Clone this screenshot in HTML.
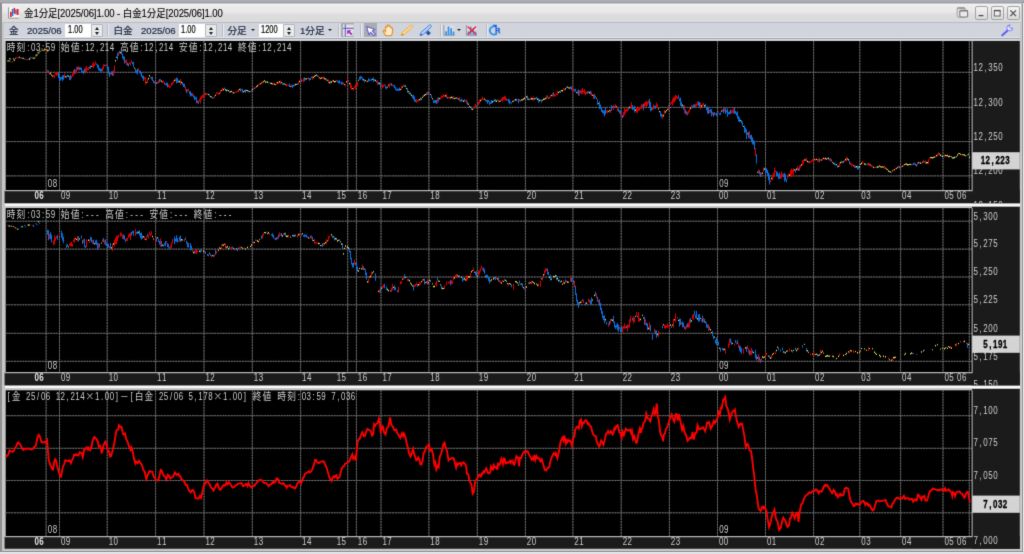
<!DOCTYPE html>
<html lang="ja">
<head>
<meta charset="utf-8">
<title>金1分足[2025/06]1.00 - 白金1分足[2025/06]1.00</title>
<style>
html,body{margin:0;padding:0}
body{width:1024px;height:554px;overflow:hidden;position:relative;background:#dfe1e8;font-family:"Liberation Sans","Noto Sans CJK JP",sans-serif;font-size:10px;color:#222}
.abs{position:absolute}
#topband{left:0;top:0;width:1024px;height:3.4px;background:linear-gradient(#abadb5,#a9abb3 70%,#909298)}
#win{left:0;top:3.4px;width:1022.4px;height:548.8px;background:#c6c6c6}
#ledge{left:0;top:3.4px;width:1.8px;height:548.8px;background:#8f8f8f}
#redge{left:1021.5px;top:3.4px;width:.9px;height:548.8px;background:#b2b2b2}
#bedge{left:0;top:551.4px;width:1022.4px;height:.9px;background:#adadad}
#title{left:1.8px;top:3.6px;width:1018.8px;height:18.6px;background:linear-gradient(#f4f4f4,#ececec 12%,#e9e9e9 42%,#dedede 56%,#dadada)}
#ttext{left:24px;top:6.6px;height:13px;line-height:13px;font-size:10.3px;color:#000;-webkit-text-stroke:.1px #000;white-space:nowrap;letter-spacing:-.1px;transform-origin:0 50%;transform:scale(.925,1)}
#tool{left:4.4px;top:22.2px;width:1015.2px;height:14.8px;background:#d1d4dc;border-top:.6px solid #b9bcc4}
#toolb1{left:4.4px;top:37px;width:1015.2px;height:1px;background:#e2e4e9}
#toolb2{left:4.4px;top:38px;width:1015.2px;height:.9px;background:#9fa7b8}
#toolb3{left:4.4px;top:38.9px;width:1015.2px;height:1.9px;background:#d6d6d8}
.tl{position:absolute;top:24.9px;height:12px;line-height:12px;font-size:9.6px;color:#1e2740;-webkit-text-stroke:.2px #1e2740;white-space:nowrap}
.inp{position:absolute;top:23.6px;height:13.6px;background:#fff;font-size:10.4px;line-height:11.4px;color:#000;-webkit-text-stroke:.2px #000;box-sizing:border-box;padding-left:2.6px;white-space:nowrap;overflow:hidden}
.inp span{display:inline-block;transform:scaleX(.72);transform-origin:0 50%}
.spin{position:absolute;top:24px;width:11.6px;height:13.2px;background:#e8e9ec;border:.6px solid #b4b6bc;box-sizing:border-box;border-radius:1px}
.spin:before,.spin:after{content:"";position:absolute;left:2.6px;border-left:2.6px solid transparent;border-right:2.6px solid transparent}
.spin:before{top:1.5px;border-bottom:3px solid #222}
.spin:after{bottom:1.5px;border-top:3px solid #222}
.sep{position:absolute;top:24.4px;width:1.2px;height:12.4px;background:#e9ebef;border-left:.5px solid #b9bcc6}
.dd{position:absolute;top:29.4px;width:0;height:0;border-left:2.4px solid transparent;border-right:2.4px solid transparent;border-top:2.8px solid #222}
.wb{position:absolute;top:6.4px;width:13.2px;height:13.4px;box-sizing:border-box;border:.8px solid #a4a4a4;border-radius:2px;background:linear-gradient(#f4f4f4,#d9d9d9)}
.band{position:absolute;left:4.6px;width:1015px;background:#fafafa}
.pressed{position:absolute;top:23.2px;width:13.2px;height:13.8px;background:#a9acb2}
</style>
</head>
<body>
<svg width="0" height="0" style="position:absolute"><defs><filter id="soft" x="0" y="0" width="100%" height="100%" color-interpolation-filters="sRGB"><feConvolveMatrix order="3" kernelMatrix="1.2 8.6 1.2 8.6 60.8 8.6 1.2 8.6 1.2" divisor="100" edgeMode="duplicate" preserveAlpha="true"/></filter></defs></svg>
<div id="all" style="position:absolute;left:0;top:0;width:1024px;height:554px;overflow:hidden;filter:url(#soft)">
<div id="wrap" style="position:absolute;left:0;top:0;width:1024px;height:554px">
<div class="abs" id="topband"></div>
<div class="abs" id="win"></div>
<div class="abs" id="ledge"></div>
<div class="abs" id="redge"></div>
<div class="abs" id="bedge"></div>
<div class="abs" id="title"></div>
<div class="abs" id="ttext">金1分足[2025/06]1.00 - 白金1分足[2025/06]1.00</div>
<div class="abs" id="tool"></div>
<div class="abs" id="toolb1"></div><div class="abs" id="toolb2"></div><div class="abs" id="toolb3"></div>

<!-- toolbar items -->
<span class="tl" style="left:9px">金</span>
<span class="tl" style="left:27px">2025/06</span>
<div class="inp" style="left:65px;width:26px"><span>1.00</span></div><div class="spin" style="left:91.4px"></div>
<div class="sep" style="left:107px"></div>
<span class="tl" style="left:113.4px">白金</span>
<span class="tl" style="left:141px">2025/06</span>
<div class="inp" style="left:178.8px;width:26.2px"><span>1.00</span></div><div class="spin" style="left:205.2px"></div>
<div class="sep" style="left:221.6px"></div>
<span class="tl" style="left:227.4px">分足</span><div class="dd" style="left:250.8px"></div>
<div class="inp" style="left:258.8px;width:24.4px"><span>1200</span></div><div class="spin" style="left:283.2px"></div>
<span class="tl" style="left:300px">1分足</span><div class="dd" style="left:327.6px"></div>
<div class="sep" style="left:337.8px"></div>
<div class="pressed" style="left:341.2px"></div>
<div class="sep" style="left:360.2px"></div>
<div class="pressed" style="left:364px"></div>
<div class="sep" style="left:439.8px"></div>
<div class="dd" style="left:456.8px"></div>
<div class="sep" style="left:485.6px"></div>

<!-- window buttons -->
<div class="wb" style="left:974.6px"></div>
<div class="wb" style="left:990.6px"></div>
<div class="wb" style="left:1006.6px"></div>

<!-- splitter bands -->
<div class="band" style="top:203.5px;height:2.6px"></div>
<div class="band" style="top:385.9px;height:2.5px"></div>

</div>
<svg width="1024" height="42" viewBox="0 0 1024 42" style="position:absolute;left:0;top:0;will-change:transform">
<!-- app icon -->
<rect x="8.2" y="7.2" width="10.9" height="11.3" fill="#f4f4f4"/>
<path d="M8.5 7.4V18.2H19" stroke="#8a8a8a" stroke-width="0.9" fill="none"/>
<rect x="10" y="11.8" width="1.7" height="5.2" fill="#f01818"/>
<rect x="11.8" y="8.9" width="1.6" height="7.1" fill="#1878e8"/>
<rect x="13.6" y="7.9" width="1.6" height="5.8" fill="#f01818"/>
<rect x="15.3" y="9.5" width="1.4" height="4.9" fill="#2468d8"/>
<rect x="16.8" y="8.9" width="1.8" height="6.1" fill="#f02020"/>
<!-- crosshair icon -->
<rect x="343" y="24.5" width="10.7" height="11.5" fill="#e2e2e4"/>
<path d="M345.3 24.5V36M343 28.3H353.7" stroke="#5858c4" stroke-width="1" fill="none"/>
<path d="M347.4 30.6l3.4 0l-1.1 1.1l2.6 2.4l-1 1l-2.5-2.5l-1.3 1.3z" fill="#a020c0" stroke="#a020c0" stroke-width=".5"/>
<!-- pointer icon -->
<path d="M366.6 26.4l2.2 8.3l1.9-2.3l3.2 3.2l1.6-1.5l-3.2-3.1l2.6-1.5z" fill="#fff" stroke="#6a5ccc" stroke-width="1.1" stroke-linejoin="round"/>
<!-- hand icon -->
<path d="M385.6 35.6c-.4-1.6-2-2.8-2.4-4.200c-.3-1 .8-1.400 1.500-.6l.9 1l-.1-4.600c0-1.100 1.500-1.100 1.600 0l.2-1.500c.2-1 1.600-1 1.700.1l.1.900c.2-.9 1.600-.9 1.700.2l.1 1.200c.3-.8 1.500-.6 1.600.4c.2 2.200.4 5-1.300 7.100z" fill="#ffeccc" stroke="#e2963a" stroke-width="1.25" stroke-linejoin="round"/>
<!-- pencil -->
<path d="M401.300 35.500l1-3l8.600-7.400c1-.6 2.400.8 1.700 1.800l-8.400 7.700z" fill="#fbd893" stroke="#eeaa3e" stroke-width=".9" stroke-linejoin="round"/>
<path d="M401.300 35.500l.7-2.100l1.500 1.500z" fill="#b07820"/>
<!-- marker -->
<path d="M428.200 30.600l2.700 2.500l-2.500 2.400l-2.600-2.500z" fill="#2452a4"/>
<path d="M420.100 35.500l1-3l8.300-7.400c1.100-.6 2.500.8 1.800 1.800l-8.200 7.700z" fill="#bcd4fb" stroke="#3f7fe0" stroke-width="1" stroke-linejoin="round"/>
<path d="M420.100 35.500l.7-2.100l1.500 1.500z" fill="#2c5cb8"/>
<!-- bars icon -->
<rect x="443.500" y="25.100" width="11.100" height="10.500" fill="#dcdcde"/>
<path d="M443.900 25.100V35.300H454.600" stroke="#8e8e92" stroke-width=".9" fill="none"/>
<path d="M446.100 31.300V35M448.500 26.600V35M451.100 28.300V35M453.500 31.500V35" stroke="#2e90f2" stroke-width="1.700" fill="none"/>
<!-- bars with X icon -->
<rect x="466.100" y="25.100" width="10.900" height="10.500" fill="#dcdcde"/>
<path d="M466.400 25.100V35.300H477" stroke="#8e8e92" stroke-width=".9" fill="none"/>
<path d="M468.500 31.300V35M470.800 26.600V35M473.400 28.300V35M475.700 31.500V35" stroke="#4a9cf4" stroke-width="1.600" fill="none"/>
<path d="M467.600 26.400L476 34.600M476 26.400L467.600 34.600" stroke="#f02030" stroke-width="1.400" fill="none"/>
<!-- refresh icon -->
<path d="M494.5 26.500A4.100 4.100 0 1 0 497 33.300" stroke="#2a92ee" stroke-width="1.800" fill="none"/>
<path d="M492.400 24.700L496.900 24.700L496.500 28.500Z" fill="#1f5cf0"/>
<text x="495.300" y="32.900" font-family="'Liberation Sans',sans-serif" font-weight="bold" font-size="7" fill="#1c66dc" stroke="#1c66dc" stroke-width=".4">R</text>
<!-- wrench -->
<path d="M1002.300 35.300l6.400-5.900" stroke="#6060f4" stroke-width="2.100" stroke-linecap="round" fill="none"/>
<path d="M1012.800 28.200a3 3 0 1 1-2.600-3.300l-1.300 1.900l1.600 1.500z" fill="#eceaff" stroke="#7a78f6" stroke-width="1"/>
<!-- window controls -->
<rect x="957.2" y="7.6" width="7.8" height="9.6" rx="1" fill="#e2e2e2" stroke="#9c9c9c" stroke-width=".9"/><path d="M957.4 8.2h7.4" stroke="#8e8e8e" stroke-width="1.2"/>
<rect x="959.800" y="10.200" width="7.800" height="6.800" rx="1" fill="#eaeaea" stroke="#7c7c7c" stroke-width="1.100"/><path d="M960 10.900h7.400" stroke="#7c7c7c" stroke-width="1.300"/>
<path d="M978.600 15.600h4.800" stroke="#4a4a4a" stroke-width="1.300" fill="none"/>
<rect x="994.300" y="10.400" width="5.800" height="5.600" fill="#eee" stroke="#555" stroke-width=".9"/>
<path d="M994 10.600h6.400" stroke="#4a4a4a" stroke-width="1.300" fill="none"/>
<path d="M1010.400 10.400l5.600 5.800M1016 10.400l-5.600 5.800" stroke="#4a4a4a" stroke-width="1.200" fill="none"/>
</svg>

<svg width="1024" height="554" viewBox="0 0 1024 554" style="position:absolute;left:0;top:0;will-change:transform" font-family="'Liberation Sans','Noto Sans CJK JP',sans-serif"><style>.w{font-family:"Noto Sans CJK JP","Liberation Sans",sans-serif}</style><clipPath id="c1"><rect x="4" y="40.8" width="1016" height="162.5"/></clipPath><g clip-path="url(#c1)"><rect x="4.6" y="190.4" width="1015.2" height="13.0" fill="#1b1b1b"/><rect x="972" y="40.8" width="47.8" height="162.6" fill="#1b1b1b"/><rect x="5.7" y="40.8" width="966.3" height="149.6" fill="#000"/><path d="M46.10 40.8V190.4M59.50 40.8V190.4M107.20 40.8V190.4M155.60 40.8V190.4M204.00 40.8V190.4M252.30 40.8V190.4M300.60 40.8V190.4M347.70 40.8V190.4M356.40 40.8V190.4M381.00 40.8V190.4M428.90 40.8V190.4M477.30 40.8V190.4M525.40 40.8V190.4M572.90 40.8V190.4M621.20 40.8V190.4M669.40 40.8V190.4M717.50 40.8V190.4M765.50 40.8V190.4M813.60 40.8V190.4M859.80 40.8V190.4M900.60 40.8V190.4M943.00 40.8V190.4M969.30 40.8V190.4M5.7 72.30H972M5.7 107.40H972M5.7 141.60H972M5.7 175.90H972" stroke="#2c2c2c" stroke-width="0.95" fill="none"/><path d="M46.10 40.8V190.4M59.50 40.8V190.4M107.20 40.8V190.4M155.60 40.8V190.4M204.00 40.8V190.4M252.30 40.8V190.4M300.60 40.8V190.4M347.70 40.8V190.4M356.40 40.8V190.4M381.00 40.8V190.4M428.90 40.8V190.4M477.30 40.8V190.4M525.40 40.8V190.4M572.90 40.8V190.4M621.20 40.8V190.4M669.40 40.8V190.4M717.50 40.8V190.4M765.50 40.8V190.4M813.60 40.8V190.4M859.80 40.8V190.4M900.60 40.8V190.4M943.00 40.8V190.4M969.30 40.8V190.4M5.7 72.30H972M5.7 107.40H972M5.7 141.60H972M5.7 175.90H972" stroke="#727272" stroke-width="0.95" stroke-dasharray="1.85 0.93" fill="none"/><path d="M4.6 190.60H972.6M972.1 40.8V191.10" stroke="#b4b4b4" stroke-width="1.1" fill="none"/><text xml:space="preserve" transform="scale(0.700,1)" x="1390.77 1397.80 1406.42 1411.86 1418.89 1425.92" y="70.7" fill="#cdcdcd" font-size="11.4">12,350</text><text xml:space="preserve" transform="scale(0.700,1)" x="1390.77 1397.80 1406.42 1411.86 1418.89 1425.92" y="105.8" fill="#cdcdcd" font-size="11.4">12,300</text><text xml:space="preserve" transform="scale(0.700,1)" x="1390.77 1397.80 1406.42 1411.86 1418.89 1425.92" y="140.0" fill="#cdcdcd" font-size="11.4">12,250</text><text xml:space="preserve" transform="scale(0.700,1)" x="1390.77 1397.80 1406.42 1411.86 1418.89 1425.92" y="174.3" fill="#cdcdcd" font-size="11.4">12,200</text><text xml:space="preserve" transform="scale(0.700,1)" x="1390.77 1397.80 1406.42 1411.86 1418.89 1425.92" y="208.7" fill="#cdcdcd" font-size="11.4">12,150</text><text xml:space="preserve" transform="scale(0.700,1)" x="68.35 75.37" y="187.0" fill="#cdcdcd" font-size="11.4">08</text><text xml:space="preserve" transform="scale(0.700,1)" x="1027.35 1034.37" y="187.0" fill="#cdcdcd" font-size="11.4">09</text><text xml:space="preserve" transform="scale(0.700,1)" x="87.06 94.09" y="198.7" fill="#cdcdcd" font-size="11.4">09</text><text xml:space="preserve" transform="scale(0.700,1)" x="155.20 162.23" y="198.7" fill="#cdcdcd" font-size="11.4">10</text><text xml:space="preserve" transform="scale(0.700,1)" x="224.35 231.37" y="198.7" fill="#cdcdcd" font-size="11.4">11</text><text xml:space="preserve" transform="scale(0.700,1)" x="293.49 300.52" y="198.7" fill="#cdcdcd" font-size="11.4">12</text><text xml:space="preserve" transform="scale(0.700,1)" x="362.49 369.52" y="198.7" fill="#cdcdcd" font-size="11.4">13</text><text xml:space="preserve" transform="scale(0.700,1)" x="431.49 438.52" y="198.7" fill="#cdcdcd" font-size="11.4">14</text><text xml:space="preserve" transform="scale(0.700,1)" x="480.92 487.95" y="198.7" fill="#cdcdcd" font-size="11.4">15</text><text xml:space="preserve" transform="scale(0.700,1)" x="511.20 518.23" y="198.7" fill="#cdcdcd" font-size="11.4">16</text><text xml:space="preserve" transform="scale(0.700,1)" x="546.35 553.37" y="198.7" fill="#cdcdcd" font-size="11.4">17</text><text xml:space="preserve" transform="scale(0.700,1)" x="614.77 621.80" y="198.7" fill="#cdcdcd" font-size="11.4">18</text><text xml:space="preserve" transform="scale(0.700,1)" x="683.92 690.95" y="198.7" fill="#cdcdcd" font-size="11.4">19</text><text xml:space="preserve" transform="scale(0.700,1)" x="752.63 759.66" y="198.7" fill="#cdcdcd" font-size="11.4">20</text><text xml:space="preserve" transform="scale(0.700,1)" x="820.49 827.52" y="198.7" fill="#cdcdcd" font-size="11.4">21</text><text xml:space="preserve" transform="scale(0.700,1)" x="889.49 896.52" y="198.7" fill="#cdcdcd" font-size="11.4">22</text><text xml:space="preserve" transform="scale(0.700,1)" x="958.35 965.37" y="198.7" fill="#cdcdcd" font-size="11.4">23</text><text xml:space="preserve" transform="scale(0.700,1)" x="1027.06 1034.09" y="198.7" fill="#cdcdcd" font-size="11.4">00</text><text xml:space="preserve" transform="scale(0.700,1)" x="1095.63 1102.66" y="198.7" fill="#cdcdcd" font-size="11.4">01</text><text xml:space="preserve" transform="scale(0.700,1)" x="1164.35 1171.37" y="198.7" fill="#cdcdcd" font-size="11.4">02</text><text xml:space="preserve" transform="scale(0.700,1)" x="1230.35 1237.37" y="198.7" fill="#cdcdcd" font-size="11.4">03</text><text xml:space="preserve" transform="scale(0.700,1)" x="1288.63 1295.66" y="198.7" fill="#cdcdcd" font-size="11.4">04</text><text xml:space="preserve" transform="scale(0.700,1)" x="1349.20 1356.23" y="198.7" fill="#cdcdcd" font-size="11.4">05</text><text xml:space="preserve" transform="scale(0.700,1)" x="1367.20 1374.23" y="198.7" fill="#cdcdcd" font-size="11.4">06</text><text xml:space="preserve" transform="scale(0.700,1)" x="49.20 56.23" y="198.7" fill="#e0e0e0" font-size="11.4" font-weight="bold">06</text><text class="w" transform="scale(0.900,1)" x="7.51 18.44" y="50.7" fill="#cdcdcd" font-size="9.7">時刻</text><text xml:space="preserve" transform="scale(0.700,1)" x="38.90 44.35 51.37 59.99 65.43 72.46 81.07" y="50.6" fill="#cdcdcd" font-size="11.4">:03:59 </text><text class="w" transform="scale(0.900,1)" x="67.64 78.57" y="50.7" fill="#cdcdcd" font-size="9.7">始値</text><text xml:space="preserve" transform="scale(0.700,1)" x="116.22 121.66 128.69 137.30 142.75 149.77 156.80 165.42" y="50.6" fill="#cdcdcd" font-size="11.4">:12,214 </text><text class="w" transform="scale(0.900,1)" x="133.24 144.17" y="50.7" fill="#cdcdcd" font-size="9.7">高値</text><text xml:space="preserve" transform="scale(0.700,1)" x="200.56 206.00 213.03 221.64 227.09 234.12 241.15 249.76" y="50.6" fill="#cdcdcd" font-size="11.4">:12,214 </text><text class="w" transform="scale(0.900,1)" x="198.84 209.77" y="50.7" fill="#cdcdcd" font-size="9.7">安値</text><text xml:space="preserve" transform="scale(0.700,1)" x="284.90 290.35 297.37 305.99 311.43 318.46 325.49 334.10" y="50.6" fill="#cdcdcd" font-size="11.4">:12,214 </text><text class="w" transform="scale(0.900,1)" x="264.44 275.37" y="50.7" fill="#cdcdcd" font-size="9.7">終値</text><text xml:space="preserve" transform="scale(0.700,1)" x="369.24 374.69 381.72 390.33 395.77 402.80 409.83" y="50.6" fill="#cdcdcd" font-size="11.4">:12,214</text><rect x="7.3" y="60.5" width="1" height="1.0" fill="#f0e050"/><rect x="8.5" y="59.9" width="1" height="1.8" fill="#f0e050"/><rect x="9.1" y="58.1" width="1" height="1.0" fill="#f0e050"/><rect x="10.0" y="58.2" width="1" height="1.8" fill="#0a78f0"/><rect x="10.3" y="61.3" width="1" height="1.0" fill="#0a78f0"/><rect x="12.1" y="61.4" width="1" height="1.2" fill="#f00000"/><rect x="12.9" y="58.3" width="1" height="1.0" fill="#f0e050"/><rect x="13.8" y="59.3" width="1" height="1.8" fill="#f0e050"/><rect x="15.2" y="57.8" width="1" height="1.0" fill="#f0e050"/><rect x="16.4" y="56.8" width="1" height="1.0" fill="#f00000"/><rect x="17.8" y="56.8" width="1" height="1.8" fill="#f00000"/><rect x="18.9" y="56.7" width="1" height="1.2" fill="#f0e050"/><rect x="20.3" y="57.3" width="1" height="1.2" fill="#0a78f0"/><rect x="21.6" y="57.8" width="1" height="1.0" fill="#f0e050"/><rect x="22.8" y="57.7" width="1" height="1.2" fill="#f0e050"/><rect x="23.8" y="58.6" width="1" height="1.0" fill="#0a78f0"/><rect x="25.2" y="58.7" width="1" height="1.0" fill="#f00000"/><rect x="26.4" y="59.1" width="1" height="1.0" fill="#0a78f0"/><rect x="27.8" y="58.7" width="1" height="1.2" fill="#f00000"/><rect x="29.1" y="58.1" width="1" height="1.8" fill="#f0e050"/><rect x="30.1" y="56.9" width="1" height="1.2" fill="#0a78f0"/><rect x="31.6" y="56.8" width="1" height="1.8" fill="#0a78f0"/><rect x="32.9" y="57.7" width="1" height="1.2" fill="#f0e050"/><rect x="34.2" y="57.4" width="1" height="1.2" fill="#f0e050"/><rect x="35.6" y="54.6" width="1" height="1.8" fill="#f0e050"/><rect x="36.6" y="54.3" width="1" height="1.2" fill="#f0e050"/><rect x="37.5" y="52.2" width="1" height="1.2" fill="#f0e050"/><rect x="38.4" y="52.2" width="1" height="1.2" fill="#f0e050"/><rect x="39.4" y="50.6" width="1" height="1.2" fill="#f0e050"/><rect x="40.7" y="50.2" width="1" height="1.2" fill="#0a78f0"/><rect x="41.5" y="48.4" width="1" height="1.0" fill="#f0e050"/><rect x="42.6" y="49.7" width="1" height="1.0" fill="#f0e050"/><rect x="44.1" y="48.6" width="1" height="1.8" fill="#f0e050"/><rect x="45.5" y="49.0" width="1" height="1.0" fill="#f0e050"/><rect x="46.3" y="49.4" width="1" height="1.8" fill="#f00000"/><rect x="47.2" y="49.8" width="1" height="1.8" fill="#f0e050"/><path d="M47.5 69.9v2.5M49.5 72.3v2.8M53.5 75.2v2.2M54.5 74.6v3.2M55.5 72.7v2.0M56.5 72.3v3.4M57.5 72.0v3.6M64.5 73.5v4.4M71.5 75.6v3.1M72.5 73.5v3.0M73.5 70.1v5.7M75.5 69.9v3.8M76.5 66.7v6.6M78.5 65.9v4.5M85.5 67.4v6.1M86.5 65.9v6.3M87.5 68.2v1.8M88.5 66.8v3.4M92.5 63.6v3.5M93.5 61.9v6.2M94.5 63.6v2.8M95.5 61.3v3.1M102.5 67.3v4.3M103.5 64.4v4.6M105.5 64.7v1.7M106.5 64.3v1.6M110.5 72.9v2.0M113.5 70.2v5.7M114.5 65.4v6.3M118.5 52.2v3.8M125.5 59.9v3.0M126.5 59.8v5.3M129.5 62.2v2.2M130.5 62.6v2.8M131.5 60.1v2.9M138.5 68.2v3.0M144.5 77.1v2.3M145.5 77.2v7.4M147.5 78.9v4.0M150.5 76.8v1.6M154.5 81.1v2.7M157.5 81.8v2.0M158.5 80.3v3.1M162.5 80.9v2.2M163.5 80.5v2.0M165.5 83.3v1.8M168.5 84.3v2.8M169.5 85.6v2.3M170.5 85.8v1.6M171.5 82.7v3.1M172.5 82.3v2.4M173.5 80.6v2.5M175.5 78.4v2.8M180.5 78.9v6.1M185.5 86.4v4.3M187.5 89.5v2.4M188.5 88.7v2.6M192.5 93.0v3.3M197.5 100.1v3.4M199.5 99.1v2.2M200.5 97.1v6.4M201.5 95.8v3.7M202.5 95.0v2.9M203.5 94.6v3.4M204.5 93.6v3.1M206.5 92.9v1.5M207.5 93.5v1.4M214.5 95.4v2.6M216.5 92.2v2.3M217.5 92.3v1.3M218.5 92.7v2.4M220.5 90.0v3.0M222.5 87.7v3.3M232.5 91.5v2.1M235.5 91.6v1.1M236.5 91.3v1.4M237.5 90.2v1.6M238.5 89.3v3.0M241.5 89.2v1.4M250.5 91.1v1.2M253.5 87.5v1.8M255.5 87.0v1.4M258.5 84.2v1.5M259.5 83.1v1.9M262.5 81.1v2.3M269.5 82.2v0.7M273.5 82.7v2.0M276.5 82.3v2.3M278.5 81.5v2.2M280.5 80.6v3.9M286.5 84.4v2.2M287.5 84.3v1.4M291.5 84.6v2.5M298.5 81.7v3.2M300.5 78.4v3.6M302.5 80.4v0.8M303.5 78.1v4.0M307.5 78.0v1.0M312.5 76.0v3.7M318.5 75.4v2.0M322.5 77.0v1.9M323.5 76.4v2.6M328.5 79.5v4.1M332.5 79.7v1.7M336.5 79.9v1.4M343.5 82.5v2.2M345.5 84.6v2.1M347.5 77.9v4.2M350.5 82.5v5.7M351.5 85.1v4.7M353.5 87.6v3.1M354.5 86.4v1.8M355.5 84.4v5.0M356.5 84.0v1.9M357.5 81.8v4.4M366.5 80.8v1.4M377.5 80.2v4.7M381.5 84.7v2.3M382.5 84.2v4.1M383.5 85.1v2.0M384.5 84.0v2.0M389.5 83.3v4.5M390.5 83.6v1.7M392.5 84.5v1.5M401.5 86.3v3.4M403.5 84.6v1.9M416.5 99.5v3.2M417.5 99.8v2.1M418.5 99.1v2.1M427.5 91.5v3.3M429.5 92.4v1.7M437.5 98.2v4.8M440.5 97.1v2.4M441.5 95.4v2.5M442.5 95.6v1.9M443.5 94.2v2.9M444.5 95.0v1.6M446.5 93.6v4.6M448.5 97.0v1.3M449.5 96.6v1.9M453.5 96.0v3.2M459.5 97.1v4.4M465.5 100.3v1.4M466.5 99.3v4.3M473.5 107.4v1.7M474.5 106.1v2.1M475.5 103.9v3.2M476.5 105.3v1.5M478.5 101.6v3.2M479.5 99.7v4.0M481.5 98.7v2.2M482.5 96.6v3.3M483.5 98.3v1.5M498.5 99.7v2.8M501.5 98.4v2.4M502.5 97.1v4.6M503.5 97.0v2.9M504.5 95.8v3.9M505.5 96.4v4.2M507.5 99.2v1.4M517.5 99.5v1.0M519.5 99.2v2.3M525.5 96.6v1.8M530.5 97.8v2.3M533.5 96.5v4.1M546.5 95.3v4.2M549.5 96.5v2.2M550.5 95.2v2.3M552.5 93.1v3.8M554.5 94.2v2.6M555.5 94.4v2.0M556.5 93.3v1.6M557.5 90.8v4.4M563.5 88.0v2.3M564.5 88.8v1.7M572.5 86.6v6.3M573.5 89.2v1.6M579.5 90.3v5.1M581.5 89.4v4.9M582.5 88.0v6.1M583.5 90.5v2.0M584.5 89.2v4.9M585.5 91.5v3.9M586.5 91.6v2.4M591.5 91.6v4.1M593.5 94.0v5.1M606.5 110.7v1.9M607.5 110.1v3.3M610.5 109.3v3.7M613.5 104.7v5.3M615.5 104.0v3.2M617.5 107.0v4.4M621.5 112.0v4.9M623.5 112.0v5.0M624.5 107.8v7.6M625.5 109.6v3.8M626.5 108.7v2.8M627.5 108.6v2.9M630.5 106.2v2.2M631.5 102.1v6.9M636.5 107.9v4.9M637.5 106.4v6.5M638.5 108.2v2.3M639.5 107.3v3.6M640.5 106.5v2.0M641.5 104.2v5.0M642.5 104.4v3.8M644.5 102.7v4.0M645.5 101.9v4.0M646.5 100.7v6.6M647.5 101.9v3.6M648.5 100.4v3.1M652.5 107.4v2.7M653.5 104.4v4.9M656.5 102.4v5.7M657.5 104.4v3.1M662.5 113.8v4.8M664.5 109.9v4.3M668.5 104.9v5.7M670.5 102.6v2.1M671.5 101.5v2.2M672.5 98.7v7.0M673.5 97.3v5.5M674.5 96.5v5.5M675.5 95.0v5.5M676.5 95.5v3.0M677.5 96.9v2.2M684.5 105.4v8.1M687.5 111.9v3.4M688.5 110.7v3.2M689.5 108.6v3.5M691.5 105.2v3.2M695.5 103.8v3.1M696.5 103.5v2.9M697.5 101.2v3.8M700.5 102.6v6.7M702.5 103.7v2.6M703.5 103.0v2.4M709.5 109.7v3.1M712.5 111.8v3.3M715.5 113.3v1.5M718.5 111.4v1.6M722.5 109.3v2.6M724.5 107.7v3.8M731.5 109.9v3.3M732.5 110.6v2.6M733.5 107.5v5.9M749.5 131.3v7.3M755.5 147.9v8.1M758.5 169.7v3.7M761.5 172.8v4.0M763.5 167.4v4.3M770.5 179.9v2.3M772.5 174.7v5.8M773.5 172.8v4.7M774.5 167.5v9.0M775.5 170.4v2.1M780.5 174.5v4.1M781.5 171.5v6.9M782.5 173.2v3.4M787.5 175.4v3.2M788.5 173.4v3.6M790.5 170.1v6.3M791.5 168.5v8.4M792.5 169.9v3.6M793.5 168.1v8.5M797.5 166.2v4.4M799.5 165.4v5.5M800.5 164.7v3.0M802.5 160.1v5.1M803.5 159.9v4.1M806.5 157.6v4.0M809.5 161.0v2.4M810.5 161.3v1.8M811.5 160.4v1.8M812.5 159.4v2.1M813.5 159.0v2.4M815.5 158.8v1.6M817.5 159.0v2.6M818.5 158.5v3.2M820.5 159.3v1.4M822.5 158.4v2.0M824.5 157.6v2.1M830.5 157.9v3.6M839.5 162.9v3.8M844.5 160.0v1.5M846.5 156.8v4.6M850.5 162.3v2.5M851.5 163.4v3.2M852.5 164.2v1.4M854.5 164.9v3.1M862.5 161.0v2.5M863.5 162.5v0.9M868.5 162.9v2.7M869.5 163.2v2.9M871.5 164.9v2.2M874.5 166.6v1.4M875.5 166.6v1.2M884.5 166.0v2.8M893.5 169.3v1.6M895.5 167.8v1.5M898.5 165.9v2.3M901.5 166.5v1.1M903.5 164.9v1.3M912.5 163.8v1.4M917.5 162.2v3.1M923.5 159.8v3.0M925.5 160.8v3.2M928.5 159.4v4.4M929.5 157.6v1.9M935.5 156.0v1.3M937.5 154.0v2.2M938.5 152.2v3.4M944.5 154.5v2.9M961.5 154.5v1.3" stroke="#e60000" stroke-width="0.95" fill="none"/><path d="M48.5 70.5v2.8M58.5 71.9v6.3M59.5 74.5v5.4M60.5 77.0v3.5M61.5 77.1v2.2M62.5 75.2v5.9M63.5 75.1v4.6M66.5 75.7v2.1M67.5 74.7v2.2M69.5 76.1v3.6M70.5 74.8v5.5M74.5 68.8v5.1M77.5 67.1v2.8M79.5 67.3v2.6M80.5 67.4v2.3M81.5 67.8v4.1M82.5 70.8v2.0M83.5 70.5v3.6M84.5 68.8v3.5M89.5 66.6v1.8M90.5 65.3v3.7M96.5 63.5v1.7M97.5 64.5v3.5M98.5 64.9v5.3M99.5 68.1v2.8M100.5 68.7v3.4M101.5 68.8v2.5M104.5 64.7v1.5M107.5 65.1v4.4M108.5 66.9v6.9M109.5 71.9v5.1M111.5 71.4v3.1M112.5 71.4v4.4M117.5 52.9v6.7M119.5 50.8v2.7M121.5 51.2v3.4M122.5 53.7v4.6M123.5 56.3v3.6M124.5 56.6v7.0M127.5 62.7v2.9M128.5 63.5v2.8M132.5 62.1v2.2M133.5 61.9v5.3M135.5 68.5v4.0M136.5 70.2v3.2M137.5 68.9v5.6M139.5 70.6v1.6M140.5 70.7v3.7M141.5 72.2v4.8M142.5 75.4v3.2M143.5 75.9v5.1M151.5 77.1v2.3M152.5 76.8v4.2M153.5 80.3v2.8M155.5 81.7v3.6M159.5 78.9v3.6M160.5 79.3v1.8M164.5 82.1v2.5M166.5 82.7v3.0M167.5 82.7v4.7M176.5 77.7v5.7M177.5 78.0v4.7M178.5 80.5v2.2M182.5 82.2v2.8M183.5 83.6v3.4M184.5 83.8v3.7M186.5 89.1v4.2M189.5 91.4v2.9M190.5 91.0v5.6M191.5 93.1v2.8M193.5 94.6v2.8M194.5 96.0v4.0M195.5 97.3v2.0M196.5 96.8v6.4M198.5 100.9v2.8M209.5 94.4v1.8M212.5 97.1v1.4M213.5 97.6v1.0M224.5 87.6v1.5M227.5 89.4v1.8M229.5 90.8v2.0M234.5 92.4v1.0M240.5 88.3v3.4M242.5 88.8v3.8M245.5 89.5v3.5M248.5 90.3v2.1M251.5 90.0v1.6M254.5 87.6v1.6M266.5 81.2v1.6M268.5 82.3v1.0M282.5 82.7v2.1M283.5 83.0v2.1M288.5 84.9v0.8M289.5 83.5v3.5M292.5 84.8v3.3M293.5 84.6v2.1M294.5 84.6v1.4M297.5 83.4v1.4M301.5 79.1v2.8M304.5 77.4v3.8M308.5 77.5v1.8M309.5 78.2v2.4M311.5 76.6v1.5M317.5 75.4v1.4M326.5 78.8v1.8M330.5 80.7v2.8M337.5 80.4v1.8M338.5 81.1v2.2M339.5 80.1v3.7M340.5 82.0v0.8M341.5 81.5v3.1M342.5 82.4v2.1M348.5 80.0v1.5M359.5 76.8v3.0M360.5 75.8v3.8M361.5 76.5v1.9M362.5 77.4v3.0M364.5 79.4v2.9M368.5 78.2v3.3M369.5 79.2v1.8M370.5 79.7v0.9M371.5 78.5v2.1M373.5 77.5v4.3M374.5 79.1v1.9M376.5 80.8v1.7M378.5 82.0v2.7M380.5 82.7v5.6M385.5 85.5v3.0M386.5 86.7v2.6M391.5 82.9v3.2M393.5 85.0v1.5M394.5 85.2v2.8M395.5 86.9v3.2M396.5 88.7v2.0M397.5 88.6v2.2M398.5 88.5v2.3M399.5 87.6v3.2M404.5 84.9v1.8M407.5 88.3v4.5M410.5 92.3v2.9M412.5 95.4v2.7M413.5 94.8v4.8M414.5 96.5v5.1M415.5 99.4v2.6M420.5 97.3v3.3M426.5 92.5v2.6M428.5 92.0v3.2M431.5 95.0v3.0M433.5 99.8v3.3M434.5 100.5v2.3M435.5 100.0v3.0M436.5 99.7v4.4M438.5 97.1v4.6M447.5 96.7v2.0M452.5 96.7v2.5M457.5 97.9v1.4M460.5 99.6v2.0M461.5 98.5v3.2M462.5 99.8v1.2M464.5 99.2v2.4M467.5 101.4v3.5M471.5 106.9v3.1M477.5 104.4v1.6M486.5 100.3v1.5M487.5 99.7v4.1M488.5 100.1v2.0M489.5 101.4v3.7M490.5 102.2v1.7M491.5 100.0v3.8M493.5 100.5v1.7M495.5 98.9v3.1M497.5 99.7v1.2M506.5 98.5v1.9M508.5 99.2v3.3M509.5 99.3v4.9M510.5 101.7v1.4M511.5 102.5v1.3M514.5 99.7v1.2M516.5 98.8v2.4M518.5 98.8v4.5M520.5 99.8v1.8M527.5 95.7v4.5M529.5 98.5v1.9M535.5 97.6v1.8M536.5 96.9v2.1M538.5 98.3v4.3M540.5 99.8v1.2M541.5 99.5v3.1M547.5 95.6v2.0M553.5 91.9v3.9M560.5 90.7v2.4M566.5 86.7v1.4M570.5 86.5v2.4M571.5 86.6v3.5M574.5 89.2v2.2M575.5 88.8v2.8M577.5 90.9v2.7M578.5 89.4v6.3M580.5 90.7v2.0M587.5 91.3v2.6M588.5 91.1v1.6M590.5 90.7v4.0M594.5 94.2v4.6M595.5 95.7v1.9M597.5 99.3v5.4M599.5 101.3v7.7M600.5 104.6v4.2M601.5 107.5v4.5M602.5 109.7v3.2M603.5 110.7v3.0M604.5 110.2v6.1M605.5 107.1v7.3M611.5 105.4v5.4M612.5 106.0v2.2M614.5 106.0v1.8M618.5 108.6v3.0M619.5 110.4v2.8M620.5 110.4v4.5M622.5 115.0v3.0M628.5 106.9v2.9M632.5 105.2v4.9M633.5 106.8v2.6M634.5 105.8v6.8M643.5 103.6v6.6M649.5 98.9v8.9M650.5 102.1v9.2M651.5 107.2v3.5M654.5 105.8v2.7M655.5 105.7v3.0M660.5 111.4v4.8M661.5 113.8v3.7M669.5 104.2v4.3M678.5 95.2v3.2M679.5 98.3v2.8M680.5 97.6v8.1M681.5 101.9v4.9M683.5 105.4v4.2M685.5 109.5v4.0M686.5 111.4v3.6M692.5 105.6v2.5M693.5 104.5v2.2M694.5 104.5v3.2M698.5 101.8v4.1M699.5 102.1v5.2M705.5 103.9v3.0M706.5 106.9v3.2M707.5 106.3v7.2M708.5 107.2v6.9M710.5 109.1v3.7M711.5 109.3v7.1M713.5 112.4v4.4M714.5 112.2v2.8M716.5 112.6v3.5M717.5 112.8v2.6M719.5 113.3v1.7M720.5 112.4v2.5M723.5 108.5v4.8M725.5 108.0v6.0M726.5 110.2v2.2M727.5 108.5v8.3M728.5 112.2v2.2M729.5 111.5v2.8M730.5 109.6v4.5M734.5 108.1v5.9M735.5 110.9v2.8M736.5 112.4v3.3M737.5 111.3v7.3M738.5 116.1v5.4M739.5 117.6v4.6M741.5 120.3v3.1M742.5 121.6v4.7M744.5 125.5v7.3M745.5 127.8v4.8M746.5 129.4v9.7M748.5 131.6v6.4M750.5 135.2v4.2M751.5 134.7v6.7M752.5 137.3v7.1M753.5 139.9v4.8M754.5 142.0v7.4M756.5 154.4v9.1M759.5 170.3v3.9M760.5 172.4v4.5M765.5 167.9v5.8M766.5 168.2v4.8M767.5 169.9v5.8M768.5 172.6v7.5M769.5 174.4v10.2M776.5 171.2v5.1M777.5 172.3v3.8M778.5 174.2v4.8M779.5 172.5v6.2M783.5 174.2v2.9M784.5 172.8v9.0M785.5 174.2v6.1M786.5 179.0v3.5M795.5 169.1v3.5M798.5 167.8v3.0M808.5 161.2v1.7M819.5 158.4v3.9M827.5 157.6v1.6M829.5 158.7v1.9M831.5 159.3v2.4M834.5 162.7v2.3M835.5 163.6v1.7M837.5 165.1v2.6M842.5 161.4v1.8M849.5 161.1v3.3M855.5 165.6v2.4M857.5 165.5v4.1M858.5 166.0v3.1M866.5 164.5v0.9M867.5 163.3v1.5M872.5 165.7v1.2M876.5 166.8v1.2M891.5 172.1v1.0M899.5 165.8v2.6M900.5 167.4v1.4M911.5 164.1v0.9M913.5 162.8v2.0M914.5 162.8v1.9M915.5 163.5v2.4M916.5 164.3v2.3M919.5 162.3v1.2M921.5 163.1v0.6M924.5 160.9v1.4M941.5 155.3v1.6M943.5 155.9v0.7M950.5 155.9v1.1M955.5 156.8v1.2M966.5 155.6v0.8M967.5 154.2v1.3" stroke="#0a74ea" stroke-width="0.95" fill="none"/><path d="M50.5 72.7v1.5M51.5 74.5v1.2M52.5 75.5v1.0M65.5 76.1v1.2M68.5 75.5v1.2M91.5 65.9v1.0M115.5 60.0v1.5M116.5 56.8v1.0M120.5 51.9v1.5M134.5 67.6v1.0M146.5 81.9v1.0M148.5 77.9v1.5M149.5 75.0v1.5M156.5 82.5v1.0M161.5 80.6v1.5M174.5 79.7v1.5M179.5 80.8v1.5M181.5 81.7v1.5M205.5 93.5v1.0M208.5 93.9v1.2M210.5 96.0v1.2M211.5 96.5v1.0M215.5 94.7v1.2M219.5 92.7v1.0M221.5 89.8v1.0M223.5 88.8v1.5M225.5 88.9v1.5M226.5 89.8v1.5M228.5 90.0v1.2M230.5 91.2v1.2M231.5 90.8v1.2M233.5 92.2v1.2M239.5 88.9v1.2M243.5 91.2v1.2M244.5 90.3v1.2M246.5 90.0v1.0M247.5 90.1v1.2M249.5 91.1v1.0M252.5 89.1v1.2M256.5 86.1v1.2M257.5 85.0v1.5M260.5 83.3v1.0M261.5 82.5v1.0M263.5 81.2v1.2M264.5 80.1v1.2M265.5 81.3v1.5M267.5 81.4v1.5M270.5 82.9v1.0M271.5 82.7v1.5M272.5 83.5v1.0M274.5 83.6v1.2M275.5 84.2v1.0M277.5 81.9v1.5M279.5 81.1v1.5M281.5 82.1v1.0M284.5 83.4v1.0M285.5 84.2v1.0M290.5 85.9v1.0M295.5 83.8v1.5M296.5 83.8v1.0M299.5 80.7v1.5M305.5 78.4v1.0M306.5 78.3v1.2M310.5 78.5v1.0M313.5 76.7v1.5M314.5 75.7v1.2M315.5 75.0v1.2M316.5 74.5v1.2M319.5 77.3v1.0M320.5 77.9v1.2M321.5 77.3v1.2M324.5 77.8v1.5M325.5 78.4v1.2M327.5 79.8v1.0M329.5 81.8v1.5M331.5 81.3v1.5M333.5 80.2v1.5M334.5 81.0v1.5M335.5 80.9v1.2M344.5 84.1v1.0M346.5 81.2v1.2M349.5 82.9v1.5M352.5 88.1v1.0M358.5 79.8v1.0M363.5 79.2v1.2M365.5 80.0v1.0M367.5 80.8v1.0M372.5 78.9v1.0M375.5 79.8v1.5M379.5 82.7v1.5M387.5 86.6v1.0M388.5 84.7v1.0M400.5 88.9v1.2M402.5 86.4v1.2M405.5 85.6v1.2M406.5 87.9v1.2M408.5 91.1v1.2M409.5 92.7v1.2M411.5 94.6v1.5M419.5 99.1v1.2M421.5 98.4v1.2M422.5 96.7v1.2M423.5 95.6v1.0M424.5 94.5v1.5M425.5 94.0v1.2M430.5 94.0v1.0M432.5 98.1v1.2M439.5 98.0v1.2M445.5 95.1v1.5M450.5 97.2v1.2M451.5 96.6v1.5M454.5 98.0v1.2M455.5 97.6v1.0M456.5 97.5v1.0M458.5 98.5v1.0M463.5 100.5v1.5M468.5 103.6v1.2M469.5 105.9v1.0M470.5 106.8v1.2M472.5 108.8v1.2M480.5 99.8v1.5M484.5 98.5v1.2M485.5 99.7v1.0M492.5 101.0v1.5M494.5 99.7v1.0M496.5 100.5v1.5M499.5 100.8v1.0M500.5 100.6v1.0M512.5 101.1v1.0M513.5 100.6v1.0M515.5 99.0v1.5M521.5 99.4v1.2M522.5 99.3v1.2M523.5 98.4v1.5M524.5 97.6v1.5M526.5 96.2v1.5M528.5 98.7v1.0M531.5 97.9v1.5M532.5 98.2v1.5M534.5 98.2v1.2M537.5 98.5v1.5M539.5 99.7v1.5M542.5 99.8v1.0M543.5 98.5v1.5M544.5 98.6v1.2M545.5 97.6v1.5M548.5 97.6v1.0M551.5 94.9v1.2M558.5 91.8v1.2M559.5 91.3v1.0M561.5 90.0v1.2M562.5 90.0v1.5M565.5 88.1v1.5M567.5 86.5v1.2M568.5 87.4v1.0M569.5 87.4v1.2M576.5 92.1v1.0M589.5 91.9v1.5M592.5 94.8v1.2M596.5 97.8v1.0M598.5 103.2v1.0M608.5 111.1v1.0M609.5 110.0v1.2M616.5 106.2v1.0M629.5 106.7v1.5M635.5 109.5v1.5M658.5 108.3v1.2M659.5 111.0v1.2M663.5 114.9v1.5M665.5 111.2v1.5M666.5 110.0v1.2M667.5 108.9v1.0M682.5 104.6v1.5M690.5 107.6v1.5M701.5 105.3v1.5M704.5 105.0v1.5M721.5 110.5v1.2M740.5 120.0v1.2M743.5 126.1v1.0M747.5 133.3v1.0M757.5 171.8v1.0M762.5 172.4v1.5M764.5 168.4v1.5M771.5 177.7v1.5M789.5 174.4v1.5M794.5 169.4v1.2M796.5 168.5v1.5M801.5 164.3v1.5M804.5 159.4v1.2M805.5 159.5v1.0M807.5 160.7v1.5M814.5 159.2v1.0M816.5 158.8v1.2M821.5 159.5v1.0M823.5 157.8v1.2M825.5 157.7v1.5M826.5 158.5v1.2M828.5 157.7v1.5M832.5 161.8v1.0M833.5 162.9v1.2M836.5 164.0v1.2M838.5 165.8v1.2M840.5 161.9v1.5M841.5 161.5v1.0M843.5 161.2v1.2M845.5 158.8v1.5M847.5 158.3v1.2M848.5 159.1v1.5M853.5 165.3v1.0M856.5 166.0v1.5M859.5 166.2v1.5M860.5 163.8v1.2M861.5 162.7v1.5M864.5 163.3v1.5M865.5 163.7v1.0M870.5 164.4v1.0M873.5 166.9v1.2M877.5 166.3v1.5M878.5 166.3v1.2M879.5 165.3v1.2M880.5 166.1v1.2M881.5 166.6v1.2M882.5 166.2v1.2M883.5 166.6v1.0M885.5 167.6v1.0M886.5 168.5v1.0M887.5 169.1v1.0M888.5 170.3v1.5M889.5 171.3v1.0M890.5 171.3v1.2M892.5 170.3v1.0M894.5 169.1v1.2M896.5 167.9v1.2M897.5 166.8v1.0M902.5 165.7v1.2M904.5 164.0v1.2M905.5 163.7v1.0M906.5 163.3v1.5M907.5 164.0v1.5M908.5 164.2v1.2M909.5 163.9v1.0M910.5 163.9v1.2M918.5 162.1v1.2M920.5 162.4v1.5M922.5 161.7v1.0M926.5 162.0v1.5M927.5 161.9v1.5M930.5 157.0v1.2M931.5 157.0v1.2M932.5 157.1v1.5M933.5 156.8v1.2M934.5 156.5v1.2M936.5 154.9v1.5M939.5 153.4v1.0M940.5 154.5v1.5M942.5 155.7v1.2M945.5 154.9v1.2M946.5 155.1v1.2M947.5 154.8v1.5M948.5 156.1v1.2M949.5 155.6v1.5M951.5 156.4v1.0M952.5 157.3v1.2M953.5 157.2v1.5M954.5 156.7v1.5M956.5 156.2v1.0M957.5 154.3v1.5M958.5 153.2v1.0M959.5 153.0v1.0M960.5 153.8v1.2M962.5 154.2v1.0M963.5 154.3v1.0M964.5 154.3v1.5M965.5 155.3v1.0M968.5 153.9v1.0M969.5 156.5v1.5" stroke="#efe05a" stroke-width="0.95" fill="none"/><rect x="972.2" y="152.2" width="47.6" height="17.2" fill="#d4d4d4"/><text stroke="#000" stroke-width="0.35" xml:space="preserve" transform="scale(0.700,1)" x="1400.97 1408.00 1416.62 1422.06 1429.09 1436.12" y="164.4" fill="#000" font-size="11.4" font-weight="bold">12,223</text></g><clipPath id="c2"><rect x="4" y="206.6" width="1016" height="178.9"/></clipPath><g clip-path="url(#c2)"><rect x="4.6" y="372.4" width="1015.2" height="13.2" fill="#1b1b1b"/><rect x="972" y="206.7" width="47.8" height="178.9" fill="#1b1b1b"/><rect x="5.7" y="208.1" width="966.3" height="164.3" fill="#000"/><path d="M46.10 208.1V372.4M59.50 208.1V372.4M107.20 208.1V372.4M155.60 208.1V372.4M204.00 208.1V372.4M252.30 208.1V372.4M300.60 208.1V372.4M347.70 208.1V372.4M356.40 208.1V372.4M381.00 208.1V372.4M428.90 208.1V372.4M477.30 208.1V372.4M525.40 208.1V372.4M572.90 208.1V372.4M621.20 208.1V372.4M669.40 208.1V372.4M717.50 208.1V372.4M765.50 208.1V372.4M813.60 208.1V372.4M859.80 208.1V372.4M900.60 208.1V372.4M943.00 208.1V372.4M969.30 208.1V372.4M5.7 221.20H972M5.7 249.10H972M5.7 277.00H972M5.7 304.80H972M5.7 333.30H972M5.7 361.30H972" stroke="#2c2c2c" stroke-width="0.95" fill="none"/><path d="M46.10 208.1V372.4M59.50 208.1V372.4M107.20 208.1V372.4M155.60 208.1V372.4M204.00 208.1V372.4M252.30 208.1V372.4M300.60 208.1V372.4M347.70 208.1V372.4M356.40 208.1V372.4M381.00 208.1V372.4M428.90 208.1V372.4M477.30 208.1V372.4M525.40 208.1V372.4M572.90 208.1V372.4M621.20 208.1V372.4M669.40 208.1V372.4M717.50 208.1V372.4M765.50 208.1V372.4M813.60 208.1V372.4M859.80 208.1V372.4M900.60 208.1V372.4M943.00 208.1V372.4M969.30 208.1V372.4M5.7 221.20H972M5.7 249.10H972M5.7 277.00H972M5.7 304.80H972M5.7 333.30H972M5.7 361.30H972" stroke="#727272" stroke-width="0.95" stroke-dasharray="1.85 0.93" fill="none"/><path d="M4.6 372.60H972.6M972.1 208.1V373.10" stroke="#b4b4b4" stroke-width="1.1" fill="none"/><text xml:space="preserve" transform="scale(0.700,1)" x="1390.77 1399.39 1404.83 1411.86 1418.89" y="219.6" fill="#cdcdcd" font-size="11.4">5,300</text><text xml:space="preserve" transform="scale(0.700,1)" x="1390.77 1399.39 1404.83 1411.86 1418.89" y="247.5" fill="#cdcdcd" font-size="11.4">5,275</text><text xml:space="preserve" transform="scale(0.700,1)" x="1390.77 1399.39 1404.83 1411.86 1418.89" y="275.4" fill="#cdcdcd" font-size="11.4">5,250</text><text xml:space="preserve" transform="scale(0.700,1)" x="1390.77 1399.39 1404.83 1411.86 1418.89" y="303.2" fill="#cdcdcd" font-size="11.4">5,225</text><text xml:space="preserve" transform="scale(0.700,1)" x="1390.77 1399.39 1404.83 1411.86 1418.89" y="331.7" fill="#cdcdcd" font-size="11.4">5,200</text><text xml:space="preserve" transform="scale(0.700,1)" x="1390.77 1399.39 1404.83 1411.86 1418.89" y="359.7" fill="#cdcdcd" font-size="11.4">5,175</text><text xml:space="preserve" transform="scale(0.700,1)" x="1390.77 1399.39 1404.83 1411.86 1418.89" y="387.7" fill="#cdcdcd" font-size="11.4">5,150</text><text xml:space="preserve" transform="scale(0.700,1)" x="68.35 75.37" y="369.0" fill="#cdcdcd" font-size="11.4">08</text><text xml:space="preserve" transform="scale(0.700,1)" x="1027.35 1034.37" y="369.0" fill="#cdcdcd" font-size="11.4">09</text><text xml:space="preserve" transform="scale(0.700,1)" x="87.06 94.09" y="380.7" fill="#cdcdcd" font-size="11.4">09</text><text xml:space="preserve" transform="scale(0.700,1)" x="155.20 162.23" y="380.7" fill="#cdcdcd" font-size="11.4">10</text><text xml:space="preserve" transform="scale(0.700,1)" x="224.35 231.37" y="380.7" fill="#cdcdcd" font-size="11.4">11</text><text xml:space="preserve" transform="scale(0.700,1)" x="293.49 300.52" y="380.7" fill="#cdcdcd" font-size="11.4">12</text><text xml:space="preserve" transform="scale(0.700,1)" x="362.49 369.52" y="380.7" fill="#cdcdcd" font-size="11.4">13</text><text xml:space="preserve" transform="scale(0.700,1)" x="431.49 438.52" y="380.7" fill="#cdcdcd" font-size="11.4">14</text><text xml:space="preserve" transform="scale(0.700,1)" x="480.92 487.95" y="380.7" fill="#cdcdcd" font-size="11.4">15</text><text xml:space="preserve" transform="scale(0.700,1)" x="511.20 518.23" y="380.7" fill="#cdcdcd" font-size="11.4">16</text><text xml:space="preserve" transform="scale(0.700,1)" x="546.35 553.37" y="380.7" fill="#cdcdcd" font-size="11.4">17</text><text xml:space="preserve" transform="scale(0.700,1)" x="614.77 621.80" y="380.7" fill="#cdcdcd" font-size="11.4">18</text><text xml:space="preserve" transform="scale(0.700,1)" x="683.92 690.95" y="380.7" fill="#cdcdcd" font-size="11.4">19</text><text xml:space="preserve" transform="scale(0.700,1)" x="752.63 759.66" y="380.7" fill="#cdcdcd" font-size="11.4">20</text><text xml:space="preserve" transform="scale(0.700,1)" x="820.49 827.52" y="380.7" fill="#cdcdcd" font-size="11.4">21</text><text xml:space="preserve" transform="scale(0.700,1)" x="889.49 896.52" y="380.7" fill="#cdcdcd" font-size="11.4">22</text><text xml:space="preserve" transform="scale(0.700,1)" x="958.35 965.37" y="380.7" fill="#cdcdcd" font-size="11.4">23</text><text xml:space="preserve" transform="scale(0.700,1)" x="1027.06 1034.09" y="380.7" fill="#cdcdcd" font-size="11.4">00</text><text xml:space="preserve" transform="scale(0.700,1)" x="1095.63 1102.66" y="380.7" fill="#cdcdcd" font-size="11.4">01</text><text xml:space="preserve" transform="scale(0.700,1)" x="1164.35 1171.37" y="380.7" fill="#cdcdcd" font-size="11.4">02</text><text xml:space="preserve" transform="scale(0.700,1)" x="1230.35 1237.37" y="380.7" fill="#cdcdcd" font-size="11.4">03</text><text xml:space="preserve" transform="scale(0.700,1)" x="1288.63 1295.66" y="380.7" fill="#cdcdcd" font-size="11.4">04</text><text xml:space="preserve" transform="scale(0.700,1)" x="1349.20 1356.23" y="380.7" fill="#cdcdcd" font-size="11.4">05</text><text xml:space="preserve" transform="scale(0.700,1)" x="1367.20 1374.23" y="380.7" fill="#cdcdcd" font-size="11.4">06</text><text xml:space="preserve" transform="scale(0.700,1)" x="49.20 56.23" y="380.7" fill="#e0e0e0" font-size="11.4" font-weight="bold">06</text><text class="w" transform="scale(0.900,1)" x="7.51 18.44" y="218.3" fill="#cdcdcd" font-size="9.7">時刻</text><text xml:space="preserve" transform="scale(0.700,1)" x="38.90 44.35 51.37 59.99 65.43 72.46 81.07" y="218.2" fill="#cdcdcd" font-size="11.4">:03:59 </text><text class="w" transform="scale(0.900,1)" x="67.64 78.57" y="218.3" fill="#cdcdcd" font-size="9.7">始値</text><text xml:space="preserve" transform="scale(0.700,1)" x="116.22 122.93 129.96 136.99 144.33" y="218.2" fill="#cdcdcd" font-size="11.4">:--- </text><text class="w" transform="scale(0.900,1)" x="116.84 127.77" y="218.3" fill="#cdcdcd" font-size="9.7">高値</text><text xml:space="preserve" transform="scale(0.700,1)" x="179.47 186.19 193.22 200.24 207.59" y="218.2" fill="#cdcdcd" font-size="11.4">:--- </text><text class="w" transform="scale(0.900,1)" x="166.04 176.97" y="218.3" fill="#cdcdcd" font-size="9.7">安値</text><text xml:space="preserve" transform="scale(0.700,1)" x="242.73 249.44 256.47 263.50 270.84" y="218.2" fill="#cdcdcd" font-size="11.4">:--- </text><text class="w" transform="scale(0.900,1)" x="215.24 226.17" y="218.3" fill="#cdcdcd" font-size="9.7">終値</text><text xml:space="preserve" transform="scale(0.700,1)" x="305.99 312.70 319.73 326.76" y="218.2" fill="#cdcdcd" font-size="11.4">:---</text><rect x="7.5" y="224.8" width="1" height="1.2" fill="#f00000"/><rect x="8.7" y="225.2" width="1" height="1.8" fill="#f0e050"/><rect x="9.5" y="225.7" width="1" height="1.2" fill="#0a78f0"/><rect x="11.0" y="225.7" width="1" height="1.0" fill="#f0e050"/><rect x="11.1" y="225.8" width="1" height="1.2" fill="#0a78f0"/><rect x="12.7" y="226.1" width="1" height="1.0" fill="#f0e050"/><rect x="14.2" y="226.6" width="1" height="1.2" fill="#f00000"/><rect x="15.2" y="227.4" width="1" height="1.0" fill="#f0e050"/><rect x="16.9" y="228.6" width="1" height="1.2" fill="#f0e050"/><rect x="18.2" y="228.3" width="1" height="1.2" fill="#0a78f0"/><rect x="20.8" y="225.8" width="1" height="1.8" fill="#0a78f0"/><rect x="21.9" y="226.1" width="1" height="1.2" fill="#f0e050"/><rect x="24.2" y="224.8" width="1" height="1.2" fill="#0a78f0"/><rect x="24.9" y="226.4" width="1" height="1.0" fill="#0a78f0"/><rect x="27.8" y="224.2" width="1" height="1.8" fill="#f0e050"/><rect x="29.1" y="224.5" width="1" height="1.0" fill="#f0e050"/><rect x="31.8" y="224.7" width="1" height="1.0" fill="#f00000"/><rect x="33.0" y="225.1" width="1" height="1.8" fill="#0a78f0"/><rect x="35.4" y="223.1" width="1" height="1.0" fill="#0a78f0"/><rect x="36.5" y="224.0" width="1" height="1.2" fill="#0a78f0"/><rect x="38.0" y="221.2" width="1" height="1.0" fill="#f0e050"/><rect x="38.8" y="222.6" width="1" height="1.2" fill="#0a78f0"/><path d="M49.5 233.7v5.3M53.5 240.3v5.0M54.5 235.7v8.6M55.5 237.4v3.4M56.5 235.8v2.5M59.5 232.9v2.7M69.5 243.7v1.9M70.5 242.6v3.8M71.5 241.8v4.5M72.5 243.7v3.0M73.5 239.4v2.6M74.5 237.8v4.7M77.5 235.9v5.4M83.5 239.2v3.6M86.5 239.4v7.7M89.5 239.6v3.2M92.5 240.1v3.7M98.5 243.2v5.4M102.5 239.3v2.5M104.5 240.4v3.8M109.5 246.3v2.1M112.5 243.7v7.5M114.5 240.0v6.5M115.5 237.7v6.5M116.5 235.9v8.5M117.5 235.7v5.3M118.5 234.4v3.2M120.5 232.3v4.3M121.5 233.1v2.7M122.5 234.6v4.6M126.5 237.9v3.0M127.5 237.8v3.2M128.5 234.4v3.3M129.5 233.3v3.9M130.5 232.5v7.6M135.5 229.0v7.0M144.5 236.5v3.1M146.5 236.3v4.1M148.5 235.3v3.2M149.5 231.7v3.2M150.5 233.5v2.8M151.5 231.1v3.7M155.5 238.4v5.3M160.5 238.2v8.4M166.5 241.1v2.1M170.5 245.4v2.0M171.5 242.5v5.9M172.5 238.9v4.5M178.5 240.7v1.5M184.5 239.0v2.6M192.5 249.5v2.5M195.5 250.1v3.3M196.5 249.2v4.9M197.5 250.3v2.0M204.5 251.2v1.9M211.5 254.9v2.6M214.5 254.3v2.2M216.5 250.9v2.8M221.5 244.9v4.2M225.5 243.5v4.9M230.5 247.5v1.3M231.5 246.8v2.4M235.5 249.1v1.3M239.5 247.3v2.9M240.5 246.1v1.4M252.5 244.0v2.1M255.5 239.5v1.5M256.5 239.7v1.3M262.5 234.6v3.8M263.5 233.1v2.7M269.5 233.3v1.8M274.5 237.7v1.6M277.5 237.0v2.2M279.5 232.5v4.2M280.5 233.6v1.9M283.5 233.4v1.8M288.5 234.8v2.6M297.5 234.9v2.9M299.5 233.1v2.8M300.5 233.0v1.8M309.5 238.1v0.9M311.5 235.4v3.3M314.5 238.9v5.0M315.5 241.8v1.8M316.5 242.4v1.1M317.5 242.4v1.2M323.5 242.8v3.0M326.5 238.8v4.9M328.5 236.5v4.3M329.5 235.5v2.4M346.5 246.8v0.9M354.5 259.7v4.9M362.5 264.4v5.6M368.5 278.6v4.0M371.5 271.5v5.9M379.5 289.4v3.7M382.5 285.8v2.8M383.5 284.6v3.0M391.5 287.7v4.3M392.5 283.8v6.4M398.5 286.7v6.0M400.5 281.7v2.8M401.5 281.0v2.7M403.5 276.6v3.2M407.5 278.9v2.1M414.5 284.5v2.3M415.5 284.1v2.6M416.5 282.3v2.9M419.5 282.1v3.4M420.5 282.2v2.3M422.5 279.1v2.1M427.5 279.2v5.5M435.5 282.8v1.8M436.5 280.7v5.9M444.5 285.2v3.8M446.5 281.4v3.7M448.5 281.7v2.1M449.5 281.6v1.5M451.5 280.3v4.0M452.5 280.9v2.9M453.5 276.1v4.1M455.5 274.7v2.9M456.5 274.1v3.5M466.5 275.3v5.8M467.5 275.6v4.6M470.5 272.8v4.7M473.5 267.6v3.3M478.5 270.4v5.2M479.5 270.6v3.9M480.5 268.4v3.2M481.5 265.9v2.9M482.5 268.3v1.7M496.5 276.6v2.3M499.5 280.1v2.3M500.5 280.6v2.4M502.5 279.7v2.1M508.5 283.1v2.9M513.5 284.0v5.6M524.5 287.5v2.3M528.5 282.2v2.2M531.5 280.8v3.4M538.5 283.4v2.9M540.5 280.7v5.9M542.5 277.2v3.1M544.5 270.3v4.9M545.5 268.0v4.4M546.5 268.5v2.5M563.5 280.4v3.7M566.5 280.4v1.9M570.5 275.1v6.4M574.5 280.7v6.5M581.5 300.7v2.3M583.5 299.9v3.1M588.5 298.5v3.7M589.5 299.6v3.1M596.5 293.6v4.9M598.5 299.8v3.6M608.5 322.7v4.2M610.5 319.0v4.5M619.5 326.8v2.1M622.5 326.8v5.9M623.5 325.9v2.7M624.5 323.4v5.2M625.5 326.3v2.5M627.5 324.1v7.4M628.5 324.9v2.8M629.5 319.2v8.3M630.5 315.7v6.5M633.5 316.4v7.1M634.5 317.5v4.7M636.5 311.9v4.3M638.5 312.0v9.7M639.5 317.9v3.8M645.5 319.3v5.6M649.5 322.3v7.7M654.5 328.7v3.3M658.5 330.8v6.3M664.5 325.0v3.3M665.5 324.6v4.1M666.5 325.9v2.0M667.5 323.4v4.3M668.5 325.4v1.6M669.5 325.3v3.2M673.5 318.8v8.9M675.5 313.5v8.4M677.5 316.8v1.7M681.5 322.3v2.5M685.5 326.3v4.0M686.5 324.7v3.9M688.5 322.7v5.0M689.5 319.2v8.4M692.5 314.9v4.1M693.5 314.1v5.8M703.5 317.8v4.2M708.5 324.2v7.1M725.5 348.8v5.1M728.5 343.4v4.5M729.5 338.9v6.5M734.5 343.6v2.1M736.5 342.2v2.2M738.5 343.5v4.3M743.5 348.6v5.1M747.5 345.1v3.9M748.5 348.2v5.2M750.5 350.9v4.2M751.5 347.7v7.3M758.5 353.9v8.6M761.5 358.2v3.5M765.5 353.4v2.4M766.5 352.9v2.5M771.5 355.0v3.7M775.5 351.5v2.7M789.5 348.3v3.2M798.5 347.7v2.0M810.5 353.6v1.7M813.5 352.5v2.6M814.5 353.4v1.5M820.5 349.6v4.9M839.5 353.4v2.6M849.5 350.9v2.3M853.5 350.3v2.9M868.5 347.3v3.5M888.5 357.6v1.7M892.5 358.4v2.5M913.5 352.9v1.2M950.5 346.0v2.7M956.5 343.2v3.0M960.5 340.9v1.6M966.5 342.4v1.7" stroke="#e60000" stroke-width="0.95" fill="none"/><path d="M47.5 229.8v4.8M48.5 230.1v10.1M50.5 232.2v7.1M51.5 234.7v7.7M57.5 235.1v4.7M61.5 230.6v7.2M62.5 233.3v7.5M63.5 236.9v6.2M66.5 244.6v3.8M67.5 244.1v2.4M78.5 236.1v5.4M81.5 235.5v3.0M82.5 239.9v4.1M84.5 238.7v8.3M85.5 245.7v2.3M90.5 236.8v3.8M91.5 237.4v4.9M93.5 239.6v4.5M95.5 240.4v4.0M96.5 239.7v5.2M97.5 242.6v7.2M99.5 243.5v3.9M103.5 238.0v4.1M105.5 239.2v5.9M106.5 243.1v3.1M107.5 243.8v4.3M108.5 243.8v3.7M110.5 243.0v5.1M123.5 234.5v4.4M124.5 235.5v4.4M125.5 239.3v2.6M131.5 232.1v3.6M132.5 231.1v2.0M133.5 230.7v5.0M136.5 232.0v1.9M137.5 231.1v2.9M139.5 230.3v5.1M140.5 233.0v5.2M141.5 232.5v7.0M142.5 235.6v3.0M147.5 233.7v2.9M156.5 237.4v4.3M158.5 238.6v3.3M159.5 240.9v3.6M161.5 241.1v5.9M163.5 244.7v2.0M164.5 243.0v2.3M165.5 241.0v5.2M167.5 243.1v4.0M168.5 244.2v3.4M169.5 247.0v2.2M174.5 236.5v7.6M175.5 238.7v2.8M176.5 235.2v6.6M177.5 238.0v4.3M179.5 236.7v4.3M180.5 235.5v6.7M185.5 237.3v2.5M186.5 240.8v2.8M187.5 242.4v5.0M188.5 243.0v4.5M190.5 243.2v7.5M191.5 245.7v4.2M194.5 250.7v2.8M200.5 250.0v2.5M201.5 249.2v2.2M205.5 251.4v2.3M207.5 254.0v1.9M208.5 254.4v1.9M210.5 254.0v1.8M213.5 254.9v2.0M215.5 250.1v4.6M229.5 246.3v2.6M232.5 246.5v1.2M234.5 248.2v1.6M237.5 248.4v2.8M238.5 247.5v1.6M244.5 247.7v1.4M253.5 241.6v1.8M261.5 235.6v3.4M266.5 231.5v0.9M271.5 234.2v1.3M272.5 233.3v3.6M273.5 234.9v3.5M275.5 238.1v1.8M276.5 237.1v3.1M278.5 234.5v4.0M281.5 233.0v3.5M285.5 232.4v3.9M293.5 234.5v2.6M295.5 234.3v2.2M301.5 233.8v1.8M303.5 235.1v1.6M304.5 234.3v2.9M305.5 234.8v1.7M306.5 234.6v2.8M307.5 236.1v1.6M310.5 235.6v2.7M312.5 236.8v4.5M321.5 244.9v1.5M322.5 243.3v3.5M332.5 235.6v2.5M334.5 237.1v3.3M339.5 239.3v1.8M342.5 243.2v5.7M349.5 248.1v4.4M350.5 251.0v8.3M351.5 257.8v6.7M352.5 263.0v4.3M353.5 262.6v4.9M356.5 260.8v8.4M357.5 266.6v5.2M363.5 266.4v3.5M365.5 269.3v5.8M366.5 272.6v7.1M375.5 273.4v7.4M380.5 286.9v5.5M384.5 283.9v4.5M386.5 286.6v3.3M390.5 290.1v1.8M394.5 285.4v5.0M395.5 287.4v2.7M397.5 290.1v2.0M404.5 274.3v4.2M408.5 278.9v2.1M413.5 285.4v5.1M417.5 284.2v2.6M424.5 278.8v5.8M426.5 281.0v2.5M430.5 280.0v1.9M437.5 277.1v3.3M441.5 285.5v3.8M450.5 280.1v5.2M459.5 275.3v2.7M462.5 277.2v4.4M463.5 278.5v1.9M475.5 271.6v3.6M476.5 271.4v6.3M483.5 267.3v4.4M484.5 269.1v4.8M486.5 274.8v3.6M487.5 274.8v3.2M488.5 276.6v4.5M489.5 277.2v6.4M495.5 276.2v3.9M498.5 277.8v3.8M504.5 279.1v1.7M511.5 284.5v2.7M519.5 280.6v3.2M520.5 283.6v1.6M522.5 283.5v3.8M525.5 288.9v2.1M529.5 281.8v2.2M547.5 268.5v5.9M548.5 271.9v3.3M550.5 274.8v5.8M556.5 275.1v5.1M559.5 279.7v2.0M560.5 280.8v2.0M565.5 279.4v3.1M571.5 278.2v3.8M572.5 277.5v2.1M573.5 280.1v3.2M575.5 285.7v9.4M576.5 293.3v8.3M577.5 299.7v5.4M578.5 302.3v5.6M582.5 299.1v2.1M585.5 302.5v2.9M590.5 300.4v3.8M591.5 297.4v7.2M595.5 291.9v3.6M597.5 296.8v4.8M599.5 299.3v6.8M600.5 303.0v7.1M601.5 307.8v5.9M602.5 311.2v6.9M603.5 315.7v4.5M604.5 315.3v7.9M606.5 321.7v3.0M609.5 321.0v4.2M613.5 315.9v7.1M614.5 321.6v5.8M615.5 325.3v3.7M616.5 324.7v2.9M617.5 322.8v7.5M618.5 324.7v7.1M620.5 327.5v4.3M621.5 326.5v5.0M626.5 325.7v2.3M632.5 317.7v3.0M637.5 315.7v1.9M644.5 316.6v8.3M646.5 322.8v3.1M647.5 323.3v6.7M650.5 325.0v6.5M652.5 334.3v5.4M655.5 330.4v3.8M656.5 330.4v7.4M662.5 325.7v2.4M671.5 326.1v1.8M679.5 318.5v8.1M680.5 318.8v5.9M682.5 321.5v5.8M683.5 322.6v4.6M684.5 326.5v2.4M687.5 323.3v4.1M690.5 317.9v5.0M694.5 310.7v4.4M695.5 314.9v3.4M696.5 310.9v7.9M698.5 314.3v7.4M699.5 314.1v7.3M701.5 319.3v2.0M702.5 315.6v7.1M704.5 318.9v4.1M706.5 322.5v5.0M707.5 324.7v3.3M709.5 326.4v3.5M712.5 330.9v5.5M713.5 335.9v3.3M715.5 339.5v4.0M716.5 337.5v7.7M717.5 340.4v2.8M718.5 341.7v3.6M720.5 347.9v3.8M723.5 348.1v3.1M730.5 338.2v4.4M731.5 341.5v3.3M735.5 339.9v3.1M737.5 339.9v4.1M739.5 345.6v5.0M740.5 346.2v6.0M741.5 348.0v5.7M746.5 346.8v5.1M749.5 350.0v5.3M752.5 350.2v3.1M755.5 349.7v8.8M756.5 354.7v5.7M759.5 356.7v3.9M760.5 359.4v3.5M769.5 355.6v2.5M778.5 347.4v2.8M780.5 349.6v1.9M782.5 347.6v2.8M784.5 351.4v2.2M792.5 350.8v1.6M795.5 347.6v2.5M802.5 345.1v2.4M806.5 348.0v3.6M817.5 353.8v2.8M912.5 352.9v1.2M916.5 354.0v0.9M924.5 349.6v1.1M946.5 347.2v1.0M963.5 341.2v1.4M967.5 343.1v4.8" stroke="#0a74ea" stroke-width="0.95" fill="none"/><path d="M68.5 246.3v1.0M75.5 238.2v1.0M76.5 238.9v1.2M79.5 238.4v1.2M88.5 239.5v1.5M94.5 243.2v1.2M101.5 242.6v1.0M111.5 247.2v1.5M113.5 243.2v1.5M138.5 231.7v1.5M143.5 236.0v1.5M145.5 238.9v1.0M152.5 235.8v1.5M153.5 238.6v1.0M157.5 237.1v1.2M162.5 244.7v1.2M181.5 239.0v1.5M182.5 239.5v1.0M193.5 251.8v1.5M199.5 250.6v1.5M203.5 250.7v1.5M209.5 252.8v1.0M212.5 255.1v1.0M218.5 249.7v1.2M219.5 247.4v1.2M220.5 247.9v1.0M222.5 244.3v1.0M223.5 244.6v1.5M224.5 243.7v1.0M226.5 246.8v1.0M227.5 246.0v1.5M228.5 248.1v1.2M233.5 247.8v1.0M236.5 248.4v1.0M241.5 247.2v1.0M242.5 247.7v1.0M245.5 248.5v1.0M247.5 246.7v1.5M250.5 245.9v1.2M251.5 244.3v1.5M254.5 241.9v1.2M257.5 240.2v1.5M258.5 241.0v1.2M259.5 239.2v1.0M264.5 232.0v1.2M265.5 232.2v1.2M267.5 233.1v1.0M268.5 231.9v1.5M282.5 235.1v1.5M284.5 233.3v1.2M286.5 235.6v1.5M287.5 235.6v1.5M290.5 236.5v1.0M292.5 235.1v1.0M294.5 235.2v1.2M298.5 233.8v1.5M302.5 233.1v1.2M308.5 237.3v1.2M313.5 240.0v1.0M318.5 242.7v1.5M319.5 243.2v1.0M320.5 245.1v1.0M324.5 243.1v1.2M325.5 241.8v1.5M327.5 240.4v1.0M331.5 234.1v1.5M333.5 236.3v1.0M335.5 238.0v1.5M336.5 238.4v1.2M337.5 240.1v1.5M338.5 239.8v1.0M340.5 241.3v1.0M341.5 243.3v1.5M343.5 253.1v1.5M344.5 247.8v1.2M345.5 245.3v1.5M347.5 246.2v1.5M348.5 247.3v1.5M355.5 263.4v1.0M358.5 270.2v1.5M359.5 267.9v1.2M361.5 268.1v1.2M364.5 268.6v1.0M367.5 281.1v1.5M369.5 276.6v1.0M370.5 275.7v1.5M372.5 272.4v1.2M373.5 271.2v1.2M378.5 290.7v1.2M381.5 287.8v1.0M387.5 288.8v1.5M388.5 289.9v1.5M393.5 286.9v1.2M402.5 278.7v1.0M405.5 276.8v1.2M409.5 279.9v1.5M410.5 282.5v1.2M411.5 283.7v1.5M412.5 285.3v1.2M418.5 284.0v1.5M421.5 281.0v1.2M423.5 279.3v1.0M425.5 282.1v1.0M428.5 282.1v1.2M429.5 279.7v1.2M432.5 283.3v1.0M433.5 285.9v1.5M434.5 285.7v1.5M438.5 280.6v1.2M439.5 280.7v1.0M440.5 284.4v1.0M442.5 287.7v1.5M443.5 288.0v1.0M454.5 277.1v1.5M457.5 274.7v1.0M458.5 275.7v1.2M461.5 276.5v1.2M464.5 278.0v1.5M465.5 279.2v1.5M468.5 276.2v1.5M469.5 276.1v1.5M471.5 271.0v1.5M472.5 270.1v1.0M474.5 271.7v1.0M477.5 275.7v1.0M485.5 275.7v1.0M490.5 280.5v1.0M491.5 279.1v1.5M493.5 278.1v1.5M494.5 277.4v1.0M497.5 278.3v1.2M501.5 282.3v1.5M503.5 280.9v1.0M505.5 279.8v1.2M506.5 280.8v1.0M507.5 283.0v1.2M509.5 283.0v1.0M510.5 283.6v1.2M515.5 281.0v1.2M516.5 281.2v1.5M517.5 282.4v1.2M518.5 284.5v1.2M521.5 283.5v1.0M523.5 287.1v1.2M526.5 286.3v1.5M530.5 282.4v1.0M532.5 281.2v1.2M533.5 282.1v1.0M534.5 282.8v1.5M536.5 283.5v1.0M537.5 284.5v1.5M541.5 278.4v1.0M543.5 274.1v1.5M549.5 276.5v1.5M551.5 278.6v1.2M553.5 275.8v1.5M554.5 276.2v1.2M555.5 275.1v1.5M557.5 277.9v1.5M558.5 279.8v1.5M561.5 280.7v1.2M562.5 283.6v1.2M564.5 282.3v1.5M567.5 281.3v1.5M568.5 281.7v1.0M579.5 302.3v1.2M580.5 301.6v1.5M586.5 302.4v1.5M592.5 299.5v1.2M594.5 294.7v1.5M605.5 319.0v1.5M611.5 319.4v1.0M612.5 319.6v1.5M635.5 315.9v1.0M640.5 318.7v1.5M642.5 314.7v1.2M643.5 317.5v1.0M648.5 327.7v1.5M657.5 334.0v1.2M663.5 324.1v1.2M670.5 324.4v1.5M672.5 324.5v1.2M674.5 319.2v1.2M678.5 319.8v1.2M691.5 320.1v1.5M697.5 318.1v1.5M700.5 317.9v1.0M705.5 321.6v1.0M710.5 329.0v1.5M711.5 332.0v1.0M714.5 336.6v1.2M719.5 347.7v1.2M722.5 348.5v1.0M724.5 348.8v1.2M732.5 343.0v1.0M745.5 347.1v1.5M753.5 351.9v1.2M757.5 357.3v1.2M762.5 356.2v1.5M763.5 356.9v1.2M764.5 356.5v1.2M768.5 355.5v1.0M770.5 357.3v1.5M772.5 353.9v1.2M773.5 352.9v1.2M776.5 349.8v1.5M777.5 346.6v1.2M783.5 351.4v1.2M785.5 352.1v1.2M786.5 350.8v1.0M787.5 350.5v1.0M791.5 350.1v1.2M793.5 349.8v1.0M796.5 349.8v1.5M797.5 348.4v1.2M804.5 343.8v1.0M807.5 350.0v1.5M808.5 351.8v1.0M812.5 353.5v1.2M815.5 354.1v1.0M816.5 353.6v1.2M818.5 354.9v1.0M819.5 354.3v1.2M821.5 351.7v1.5M822.5 350.6v1.2M823.5 352.6v1.0M825.5 355.8v1.2M826.5 355.3v1.5M827.5 355.0v1.5M828.5 355.5v1.2M829.5 355.5v1.2M832.5 355.7v1.0M833.5 355.8v1.5M836.5 358.0v1.2M838.5 355.7v1.5M843.5 354.7v1.5M845.5 354.0v1.0M846.5 352.7v1.5M848.5 351.3v1.2M850.5 350.0v1.2M851.5 350.4v1.2M855.5 350.9v1.2M857.5 352.0v1.5M859.5 351.6v1.2M860.5 350.4v1.0M861.5 348.0v1.0M864.5 348.3v1.2M866.5 349.7v1.2M869.5 348.0v1.0M872.5 348.1v1.2M874.5 351.5v1.5M875.5 352.9v1.2M876.5 353.8v1.2M879.5 354.6v1.5M880.5 355.8v1.5M883.5 355.5v1.5M885.5 356.0v1.5M889.5 359.2v1.2M891.5 359.6v1.2M893.5 356.9v1.5M894.5 356.8v1.5M895.5 356.7v1.2M904.5 354.2v1.0M905.5 352.8v1.5M910.5 353.3v1.2M911.5 352.4v1.5M921.5 351.2v1.5M923.5 350.2v1.2M932.5 349.3v1.0M935.5 344.9v1.5M937.5 344.2v1.2M940.5 348.6v1.0M942.5 347.7v1.0M944.5 348.0v1.5M945.5 347.3v1.0M947.5 347.8v1.2M948.5 346.0v1.0M949.5 346.8v1.2M951.5 347.3v1.5M955.5 344.3v1.2M958.5 343.0v1.2M964.5 340.5v1.5M968.5 343.8v1.2" stroke="#efe05a" stroke-width="0.95" fill="none"/><rect x="972.2" y="335.6" width="47.6" height="17.2" fill="#d4d4d4"/><text stroke="#000" stroke-width="0.35" xml:space="preserve" transform="scale(0.700,1)" x="1404.49 1413.10 1418.55 1425.57 1432.60" y="347.8" fill="#000" font-size="11.4" font-weight="bold">5,191</text></g><clipPath id="c3"><rect x="4" y="388.8" width="1016" height="160"/></clipPath><g clip-path="url(#c3)"><rect x="4.6" y="536.4" width="1015.2" height="12.6" fill="#1b1b1b"/><rect x="972" y="388.9" width="47.8" height="160.1" fill="#1b1b1b"/><rect x="5.7" y="390.3" width="966.3" height="146.1" fill="#000"/><path d="M46.10 390.3V536.4M59.50 390.3V536.4M107.20 390.3V536.4M155.60 390.3V536.4M204.00 390.3V536.4M252.30 390.3V536.4M300.60 390.3V536.4M347.70 390.3V536.4M356.40 390.3V536.4M381.00 390.3V536.4M428.90 390.3V536.4M477.30 390.3V536.4M525.40 390.3V536.4M572.90 390.3V536.4M621.20 390.3V536.4M669.40 390.3V536.4M717.50 390.3V536.4M765.50 390.3V536.4M813.60 390.3V536.4M859.80 390.3V536.4M900.60 390.3V536.4M943.00 390.3V536.4M969.30 390.3V536.4M5.7 415.70H972M5.7 448.30H972M5.7 480.50H972M5.7 512.80H972" stroke="#2c2c2c" stroke-width="0.95" fill="none"/><path d="M46.10 390.3V536.4M59.50 390.3V536.4M107.20 390.3V536.4M155.60 390.3V536.4M204.00 390.3V536.4M252.30 390.3V536.4M300.60 390.3V536.4M347.70 390.3V536.4M356.40 390.3V536.4M381.00 390.3V536.4M428.90 390.3V536.4M477.30 390.3V536.4M525.40 390.3V536.4M572.90 390.3V536.4M621.20 390.3V536.4M669.40 390.3V536.4M717.50 390.3V536.4M765.50 390.3V536.4M813.60 390.3V536.4M859.80 390.3V536.4M900.60 390.3V536.4M943.00 390.3V536.4M969.30 390.3V536.4M5.7 415.70H972M5.7 448.30H972M5.7 480.50H972M5.7 512.80H972" stroke="#727272" stroke-width="0.95" stroke-dasharray="1.85 0.93" fill="none"/><path d="M4.6 536.60H972.6M972.1 390.3V537.10" stroke="#b4b4b4" stroke-width="1.1" fill="none"/><text xml:space="preserve" transform="scale(0.700,1)" x="1390.77 1399.39 1404.83 1411.86 1418.89" y="414.1" fill="#cdcdcd" font-size="11.4">7,100</text><text xml:space="preserve" transform="scale(0.700,1)" x="1390.77 1399.39 1404.83 1411.86 1418.89" y="446.5" fill="#cdcdcd" font-size="11.4">7,075</text><text xml:space="preserve" transform="scale(0.700,1)" x="1390.77 1399.39 1404.83 1411.86 1418.89" y="478.8" fill="#cdcdcd" font-size="11.4">7,050</text><text xml:space="preserve" transform="scale(0.700,1)" x="1390.77 1399.39 1404.83 1411.86 1418.89" y="511.2" fill="#cdcdcd" font-size="11.4">7,025</text><text xml:space="preserve" transform="scale(0.700,1)" x="1390.77 1399.39 1404.83 1411.86 1418.89" y="543.6" fill="#cdcdcd" font-size="11.4">7,000</text><text xml:space="preserve" transform="scale(0.700,1)" x="68.35 75.37" y="533.0" fill="#cdcdcd" font-size="11.4">08</text><text xml:space="preserve" transform="scale(0.700,1)" x="1027.35 1034.37" y="533.0" fill="#cdcdcd" font-size="11.4">09</text><text xml:space="preserve" transform="scale(0.700,1)" x="87.06 94.09" y="544.7" fill="#cdcdcd" font-size="11.4">09</text><text xml:space="preserve" transform="scale(0.700,1)" x="155.20 162.23" y="544.7" fill="#cdcdcd" font-size="11.4">10</text><text xml:space="preserve" transform="scale(0.700,1)" x="224.35 231.37" y="544.7" fill="#cdcdcd" font-size="11.4">11</text><text xml:space="preserve" transform="scale(0.700,1)" x="293.49 300.52" y="544.7" fill="#cdcdcd" font-size="11.4">12</text><text xml:space="preserve" transform="scale(0.700,1)" x="362.49 369.52" y="544.7" fill="#cdcdcd" font-size="11.4">13</text><text xml:space="preserve" transform="scale(0.700,1)" x="431.49 438.52" y="544.7" fill="#cdcdcd" font-size="11.4">14</text><text xml:space="preserve" transform="scale(0.700,1)" x="480.92 487.95" y="544.7" fill="#cdcdcd" font-size="11.4">15</text><text xml:space="preserve" transform="scale(0.700,1)" x="511.20 518.23" y="544.7" fill="#cdcdcd" font-size="11.4">16</text><text xml:space="preserve" transform="scale(0.700,1)" x="546.35 553.37" y="544.7" fill="#cdcdcd" font-size="11.4">17</text><text xml:space="preserve" transform="scale(0.700,1)" x="614.77 621.80" y="544.7" fill="#cdcdcd" font-size="11.4">18</text><text xml:space="preserve" transform="scale(0.700,1)" x="683.92 690.95" y="544.7" fill="#cdcdcd" font-size="11.4">19</text><text xml:space="preserve" transform="scale(0.700,1)" x="752.63 759.66" y="544.7" fill="#cdcdcd" font-size="11.4">20</text><text xml:space="preserve" transform="scale(0.700,1)" x="820.49 827.52" y="544.7" fill="#cdcdcd" font-size="11.4">21</text><text xml:space="preserve" transform="scale(0.700,1)" x="889.49 896.52" y="544.7" fill="#cdcdcd" font-size="11.4">22</text><text xml:space="preserve" transform="scale(0.700,1)" x="958.35 965.37" y="544.7" fill="#cdcdcd" font-size="11.4">23</text><text xml:space="preserve" transform="scale(0.700,1)" x="1027.06 1034.09" y="544.7" fill="#cdcdcd" font-size="11.4">00</text><text xml:space="preserve" transform="scale(0.700,1)" x="1095.63 1102.66" y="544.7" fill="#cdcdcd" font-size="11.4">01</text><text xml:space="preserve" transform="scale(0.700,1)" x="1164.35 1171.37" y="544.7" fill="#cdcdcd" font-size="11.4">02</text><text xml:space="preserve" transform="scale(0.700,1)" x="1230.35 1237.37" y="544.7" fill="#cdcdcd" font-size="11.4">03</text><text xml:space="preserve" transform="scale(0.700,1)" x="1288.63 1295.66" y="544.7" fill="#cdcdcd" font-size="11.4">04</text><text xml:space="preserve" transform="scale(0.700,1)" x="1349.20 1356.23" y="544.7" fill="#cdcdcd" font-size="11.4">05</text><text xml:space="preserve" transform="scale(0.700,1)" x="1367.20 1374.23" y="544.7" fill="#cdcdcd" font-size="11.4">06</text><text xml:space="preserve" transform="scale(0.700,1)" x="49.20 56.23" y="544.7" fill="#e0e0e0" font-size="11.4" font-weight="bold">06</text><text xml:space="preserve" transform="scale(0.700,1)" x="10.79" y="399.6" fill="#cdcdcd" font-size="11.4">[</text><text class="w" transform="scale(0.900,1)" x="12.97" y="399.7" fill="#cdcdcd" font-size="9.7">金</text><text xml:space="preserve" transform="scale(0.700,1)" x="31.87 37.32 44.35 52.96 58.40 65.43 74.04 79.49 86.52 95.13 100.57 107.60 114.63" y="399.6" fill="#cdcdcd" font-size="11.4"> 25/06 12,214</text><text class="w" transform="scale(0.900,1)" x="94.97" y="399.7" fill="#cdcdcd" font-size="9.7">×</text><text xml:space="preserve" transform="scale(0.700,1)" x="135.72 144.33 149.77 156.80 165.42" y="399.6" fill="#cdcdcd" font-size="11.4">1.00]</text><text class="w" transform="scale(0.900,1)" x="133.24" y="399.7" fill="#cdcdcd" font-size="9.7">－</text><text xml:space="preserve" transform="scale(0.700,1)" x="186.50" y="399.6" fill="#cdcdcd" font-size="11.4">[</text><text class="w" transform="scale(0.900,1)" x="149.64 160.57" y="399.7" fill="#cdcdcd" font-size="9.7">白金</text><text xml:space="preserve" transform="scale(0.700,1)" x="221.64 227.09 234.12 242.73 248.17 255.20 263.82 269.26 277.87 283.32 290.35 297.37" y="399.6" fill="#cdcdcd" font-size="11.4"> 25/06 5,178</text><text class="w" transform="scale(0.900,1)" x="237.11" y="399.7" fill="#cdcdcd" font-size="9.7">×</text><text xml:space="preserve" transform="scale(0.700,1)" x="318.46 327.07 332.52 339.55 348.16 355.19" y="399.6" fill="#cdcdcd" font-size="11.4">1.00] </text><text class="w" transform="scale(0.900,1)" x="280.84 291.77" y="399.7" fill="#cdcdcd" font-size="9.7">終値</text><text class="w" transform="scale(0.900,1)" x="308.17 319.11" y="399.7" fill="#cdcdcd" font-size="9.7">時刻</text><text xml:space="preserve" transform="scale(0.700,1)" x="425.47 430.92 437.95 446.56 452.00 459.03 467.64 473.09 481.70 487.15 494.17 501.20" y="399.6" fill="#cdcdcd" font-size="11.4">:03:59 7,036</text><polyline fill="none" stroke="#ff0000" stroke-width="1.85" stroke-linejoin="miter" stroke-miterlimit="5" stroke-linecap="round" points="6.3,456.6 7.5,455.4 8.5,454.1 9.5,450.5 11.1,451.4 12.1,451.6 13.3,451.7 14.3,449.2 15.3,447.8 16.5,445.6 17.3,443.2 18.3,442.3 19.1,443.5 19.9,443.9 21.1,446.2 22.1,448.7 23.3,449.8 24.1,448.8 24.9,449.1 26.1,448.7 26.9,449.0 28.5,448.4 29.5,449.0 30.7,449.6 32.3,449.2 33.5,448.3 34.3,446.8 35.5,446.4 36.3,443.5 37.5,437.2 38.7,434.8 39.7,436.2 40.5,438.5 41.5,442.3 43.1,442.1 44.1,442.3 45.3,442.0 46.1,441.8 47.1,440.2 48.7,460.1 49.7,463.5 51.3,467.0 52.3,469.4 53.1,469.5 54.3,461.8 55.1,459.3 56.1,460.6 56.9,464.5 57.9,468.8 58.9,472.2 60.1,476.0 61.1,476.6 62.7,467.4 64.3,463.8 65.3,460.2 66.9,460.9 68.1,461.2 69.3,460.2 70.9,463.1 71.7,460.5 72.9,458.7 74.1,454.8 75.3,455.0 76.1,454.2 76.9,455.1 78.5,455.2 79.7,452.2 80.9,452.7 81.7,453.2 82.7,457.0 84.3,448.7 85.5,449.2 86.7,447.4 87.9,449.6 88.7,447.8 90.3,450.0 91.5,446.6 92.7,440.5 94.3,436.9 95.5,438.4 96.3,438.8 97.9,441.9 98.7,446.6 99.9,445.7 100.9,448.3 101.7,453.3 102.7,449.2 103.7,444.8 105.3,441.6 106.1,442.7 107.1,447.3 108.1,450.8 109.1,451.7 110.1,456.7 111.1,456.0 112.7,450.0 114.3,443.4 115.3,437.0 116.5,430.2 118.1,429.8 118.9,425.3 120.5,427.0 121.5,426.9 122.7,432.3 123.5,434.5 125.1,433.5 126.1,439.0 127.7,442.1 128.9,446.2 130.5,449.8 131.3,447.2 132.1,448.5 133.7,457.3 135.3,463.3 136.1,461.4 137.7,463.1 138.9,460.8 140.5,463.1 141.5,464.4 142.3,466.3 143.5,470.2 144.5,471.2 145.5,475.2 146.3,479.1 147.9,474.5 149.5,471.2 150.7,471.5 152.3,471.6 153.5,476.1 154.5,477.3 156.1,480.3 157.7,480.7 158.5,479.3 159.7,474.8 160.7,469.8 161.5,470.2 163.1,474.6 164.3,476.3 165.1,476.6 166.3,479.5 167.9,474.7 169.1,476.0 170.3,478.5 171.5,477.4 172.5,477.2 173.3,476.2 174.9,472.3 175.9,473.7 176.7,474.9 178.3,473.9 179.5,476.1 180.3,476.1 181.1,478.7 182.3,480.0 183.1,480.3 184.7,482.5 185.9,485.3 187.1,485.1 188.7,490.3 189.5,491.0 190.7,492.4 192.3,490.0 193.1,490.1 194.3,492.4 195.5,498.0 197.1,498.5 198.7,498.5 199.9,495.9 201.1,497.8 202.3,492.4 203.9,485.9 204.9,483.8 205.7,483.3 206.5,480.3 207.5,480.5 208.7,483.4 209.7,484.1 210.9,487.4 212.5,488.9 213.5,490.6 214.5,488.4 215.5,486.9 216.3,484.3 217.5,483.7 218.7,487.9 219.7,489.5 220.7,489.7 221.7,487.8 222.5,486.4 223.5,485.0 224.5,485.8 225.3,485.2 226.5,482.3 227.5,484.4 229.1,482.3 230.7,484.5 232.3,487.3 233.1,487.6 234.7,486.2 235.5,485.9 236.5,484.9 237.5,484.2 238.3,483.7 239.9,483.3 241.5,483.0 243.1,486.2 244.7,485.3 245.5,484.2 246.5,484.1 247.5,486.1 248.5,483.1 250.1,486.1 251.7,487.5 252.7,487.1 253.7,485.4 254.9,485.5 255.7,483.6 256.7,482.9 258.3,480.6 259.9,479.8 260.7,479.9 262.3,480.5 263.3,482.5 264.3,482.8 265.3,483.0 266.5,483.3 267.5,484.6 268.7,486.2 269.7,484.8 270.7,484.3 271.9,483.7 272.7,481.8 273.5,482.8 274.3,482.4 275.1,482.2 276.7,478.4 278.3,479.4 279.1,482.6 280.7,483.4 282.3,483.9 283.5,483.2 285.1,485.5 285.9,486.0 286.7,487.7 287.5,485.9 289.1,485.9 289.9,485.1 291.5,486.9 292.3,487.4 293.1,487.1 294.7,488.5 295.7,487.6 297.3,483.7 298.5,482.1 299.3,481.6 300.3,482.0 301.1,483.5 302.1,480.9 303.1,477.7 303.9,476.9 305.1,473.7 306.7,473.0 307.7,472.2 308.7,471.3 309.9,472.5 311.5,470.8 312.5,468.9 314.1,463.9 315.1,459.8 315.9,459.8 316.7,461.2 317.5,462.4 319.1,463.1 319.9,462.1 320.9,461.9 321.9,461.4 323.5,461.2 324.5,463.0 325.7,465.7 326.7,468.2 328.3,473.4 329.1,476.7 330.3,479.4 331.5,481.0 332.7,477.5 333.7,476.4 334.5,477.4 335.5,475.7 336.3,475.2 337.5,478.9 338.7,477.7 339.5,477.4 340.7,472.5 341.7,468.7 343.3,466.3 344.3,465.9 345.1,463.7 346.7,463.0 347.5,462.5 349.1,461.5 350.7,457.8 352.3,454.4 353.3,458.9 354.1,458.9 354.9,457.0 355.9,459.2 357.5,442.4 358.5,439.4 359.7,438.9 360.7,435.8 362.3,432.4 363.9,436.4 365.1,435.9 365.9,432.4 367.5,428.9 368.3,429.5 369.9,430.2 370.9,431.4 372.1,435.5 373.1,434.5 374.1,424.2 375.1,425.8 376.1,424.1 377.7,423.0 378.9,418.7 379.7,422.7 380.7,431.4 381.5,429.3 382.3,426.2 383.1,426.9 383.9,432.2 385.5,434.6 386.7,428.4 388.3,426.9 389.3,421.9 390.1,417.3 391.3,424.8 392.9,426.9 394.5,430.3 396.1,429.6 397.1,432.8 398.7,435.3 400.3,437.9 401.9,433.4 403.1,436.0 403.9,433.4 405.5,437.2 407.1,445.7 408.1,448.0 408.9,452.9 410.5,456.4 411.5,453.9 413.1,448.9 414.3,454.4 415.5,457.8 416.3,460.4 417.1,459.9 418.3,457.4 419.5,459.7 420.3,464.3 421.3,464.6 422.5,461.4 423.5,453.6 425.1,450.9 425.9,447.5 426.9,446.6 428.1,445.8 429.1,444.5 429.9,450.9 431.5,449.1 433.1,454.8 434.3,464.5 435.3,462.5 436.3,469.5 437.9,465.8 438.7,467.0 439.7,457.0 441.3,453.4 442.5,448.3 443.3,444.2 444.5,442.7 445.3,446.0 446.9,450.4 448.5,460.4 449.5,459.2 450.5,459.0 452.1,458.0 453.7,458.2 454.9,462.9 456.1,467.6 457.1,463.5 457.9,464.8 459.1,463.2 460.1,462.8 461.1,465.5 462.7,462.5 463.7,462.5 464.9,463.8 466.1,466.0 466.9,473.7 468.1,474.0 469.7,481.7 470.9,483.3 471.7,486.2 472.7,493.6 473.7,492.3 475.3,481.0 476.5,479.7 478.1,477.0 479.3,474.7 480.9,476.4 481.7,473.7 482.5,473.9 483.5,471.4 484.5,472.3 485.5,469.9 486.3,468.3 487.9,473.0 489.1,473.4 490.1,472.6 490.9,466.7 492.1,469.2 492.9,469.6 493.7,465.0 495.3,467.9 496.5,466.9 497.3,469.8 498.1,463.6 499.7,464.8 501.3,458.8 502.1,460.8 502.9,464.1 503.9,458.4 504.7,458.9 505.5,463.3 506.7,462.4 507.7,462.9 508.9,462.2 509.9,460.8 510.7,462.9 511.7,460.9 512.5,460.5 513.3,464.0 514.1,464.7 514.9,462.6 516.5,456.1 518.1,457.8 519.1,466.4 519.9,457.8 521.1,458.2 522.7,453.6 524.3,451.5 525.3,452.8 526.9,451.0 527.7,451.3 528.9,454.4 530.1,456.4 531.7,459.6 532.5,458.3 533.3,459.5 534.3,454.9 535.3,460.2 536.5,456.2 537.7,458.3 538.9,458.1 539.7,459.5 540.5,461.3 541.7,459.3 543.3,464.8 544.9,470.0 546.1,470.5 547.7,468.1 548.5,467.8 549.3,466.6 550.5,460.6 552.1,456.4 553.7,453.2 554.9,454.8 555.7,453.0 557.3,458.2 558.9,451.8 559.9,445.3 560.7,441.5 562.3,437.8 563.5,440.7 564.3,435.4 565.9,443.5 566.7,440.6 567.5,442.1 568.3,440.0 569.3,441.0 570.1,440.6 571.1,442.4 571.9,445.4 573.1,438.5 574.3,436.8 575.3,429.5 576.5,427.1 577.3,426.6 578.9,428.3 579.7,421.0 580.9,419.5 581.9,426.1 582.9,422.5 583.9,422.8 585.5,420.2 586.7,420.6 587.7,424.0 588.7,423.4 589.9,426.2 590.9,426.4 592.5,432.7 593.7,435.2 594.7,435.9 595.9,436.0 596.7,441.6 597.9,444.0 599.1,446.6 599.9,445.4 601.1,440.5 601.9,441.4 603.5,444.7 605.1,438.4 606.1,433.6 606.9,433.2 608.1,431.0 609.3,433.2 610.9,431.1 612.5,434.6 613.3,433.8 614.5,427.9 615.3,429.0 616.5,425.9 617.7,425.2 619.3,432.5 620.5,432.8 621.7,437.7 622.7,431.8 623.9,434.9 624.7,432.4 625.9,428.7 627.5,430.4 628.3,430.1 629.3,430.4 630.1,429.8 631.1,432.9 631.9,430.6 633.1,439.2 634.3,436.3 635.1,439.3 636.3,442.8 637.1,442.1 638.7,432.4 639.9,428.4 640.7,433.0 641.7,428.7 642.5,428.2 643.5,422.9 645.1,421.0 646.3,413.6 647.5,418.0 648.3,418.8 649.1,419.1 650.3,421.3 651.9,415.0 652.9,412.0 653.7,409.2 654.7,414.3 655.7,412.8 656.7,403.7 657.9,416.9 658.9,420.4 660.1,431.8 661.1,435.5 662.3,436.4 663.1,441.4 663.9,434.5 664.9,433.7 666.1,428.6 666.9,428.0 667.9,425.2 669.5,419.8 670.7,416.6 671.7,414.3 672.7,418.0 674.3,421.7 675.9,414.0 676.9,414.4 677.7,420.5 678.9,414.1 680.5,421.8 682.1,429.9 683.3,425.8 684.5,431.7 685.3,434.0 686.3,435.6 687.5,440.9 688.7,439.6 689.9,437.8 691.5,438.2 692.5,431.9 693.7,439.5 695.3,433.0 696.5,432.7 697.5,425.2 699.1,429.4 700.7,429.0 701.7,428.0 702.9,427.2 704.1,429.1 705.1,431.2 706.1,427.3 707.1,422.7 708.3,423.0 709.1,422.1 710.7,428.7 712.3,425.8 713.9,420.9 715.1,423.1 716.7,419.2 717.5,418.3 718.7,412.1 719.9,414.6 720.7,408.1 721.7,408.2 723.3,399.5 724.3,399.1 725.3,397.1 726.3,406.1 727.5,408.2 728.7,412.8 729.7,419.5 731.3,414.0 732.9,411.1 734.1,410.7 734.9,409.6 735.7,415.1 736.9,421.1 737.7,423.5 738.7,426.9 740.3,423.7 741.1,424.3 742.1,423.8 742.9,428.1 744.5,436.6 745.7,446.9 747.3,443.9 748.1,444.9 749.7,450.5 750.9,450.7 751.7,455.3 753.3,468.9 754.1,474.4 754.9,482.8 755.9,491.7 756.7,494.6 758.3,507.0 759.1,509.6 760.7,511.0 762.3,506.7 763.1,506.6 763.9,508.3 764.9,507.0 766.5,511.4 767.5,518.7 769.1,527.2 770.7,521.8 771.9,516.0 773.5,512.1 774.5,509.7 775.7,516.7 776.5,520.3 777.5,521.3 779.1,530.0 780.7,527.9 782.3,520.7 783.3,517.7 784.9,520.2 785.7,521.6 786.5,524.7 787.5,527.0 789.1,525.1 789.9,518.5 790.7,518.3 792.3,512.7 793.1,513.9 794.7,518.3 796.3,513.3 797.5,512.7 798.5,521.8 799.7,511.6 801.3,504.0 802.3,503.8 803.5,500.4 804.5,497.5 806.1,495.3 807.7,494.2 809.3,492.1 810.9,493.0 812.5,491.1 813.3,491.5 814.5,491.0 815.5,489.5 816.5,489.5 817.7,491.3 818.7,493.2 819.5,491.1 820.7,491.4 821.7,491.7 823.3,488.2 824.3,485.6 825.1,484.9 825.9,485.9 826.9,485.0 827.9,486.0 828.9,488.1 829.7,489.1 831.3,492.1 832.1,493.2 833.7,490.1 834.9,491.7 835.9,494.9 836.9,494.4 837.7,497.3 838.9,496.0 840.1,494.0 840.9,495.5 841.7,494.7 842.5,495.4 843.5,494.9 844.7,488.7 845.9,487.8 847.1,488.0 848.3,489.0 849.9,498.6 850.7,501.1 851.7,502.7 852.7,504.1 853.7,505.9 854.7,505.8 855.7,503.7 856.5,504.2 857.7,503.7 858.5,504.7 859.7,505.0 860.7,502.9 862.3,501.0 863.5,500.8 864.5,503.0 865.3,505.0 866.3,502.9 867.1,503.1 868.3,505.7 869.1,504.7 870.1,505.7 871.3,508.7 872.9,510.6 874.1,509.1 874.9,506.1 875.7,503.2 876.5,501.0 878.1,500.5 879.3,501.5 880.9,500.8 881.7,500.8 882.7,500.7 883.9,500.6 885.5,500.0 886.3,502.1 887.3,504.5 888.1,506.2 889.7,506.7 891.3,507.5 892.5,503.5 893.5,503.1 895.1,499.6 896.7,497.6 897.9,497.7 899.5,498.9 900.7,497.9 901.5,498.7 902.3,498.2 903.9,495.8 905.1,498.9 906.7,498.2 908.3,498.1 909.3,499.6 910.9,498.8 911.9,498.7 913.1,501.7 914.7,499.4 915.9,500.4 916.7,500.2 917.9,494.8 919.5,496.2 920.5,498.2 921.5,499.9 922.3,496.5 923.1,496.9 924.3,496.1 925.3,500.4 926.9,500.7 927.9,497.7 929.5,492.2 930.3,490.9 931.9,489.8 932.9,488.5 934.1,489.2 935.3,489.3 936.1,489.9 937.7,489.8 938.9,490.4 940.1,489.7 940.9,489.4 941.9,490.2 942.7,489.5 943.9,490.7 945.1,488.3 945.9,490.6 947.5,490.3 948.7,489.3 950.3,491.3 951.5,492.6 952.3,496.1 953.1,492.1 954.3,493.4 955.1,496.1 956.3,492.2 957.5,491.9 958.5,491.7 959.5,491.4 960.7,493.3 962.3,493.8 963.1,495.5 964.3,497.7 965.1,496.6 965.9,494.1 966.9,492.0 968.1,492.2 969.7,501.3"/><rect x="972.2" y="495.6" width="47.6" height="17.2" fill="#d4d4d4"/><text stroke="#000" stroke-width="0.35" xml:space="preserve" transform="scale(0.700,1)" x="1404.49 1413.10 1418.55 1425.57 1432.60" y="507.8" fill="#000" font-size="11.4" font-weight="bold">7,032</text></g></svg>
</div>
</body>
</html>
